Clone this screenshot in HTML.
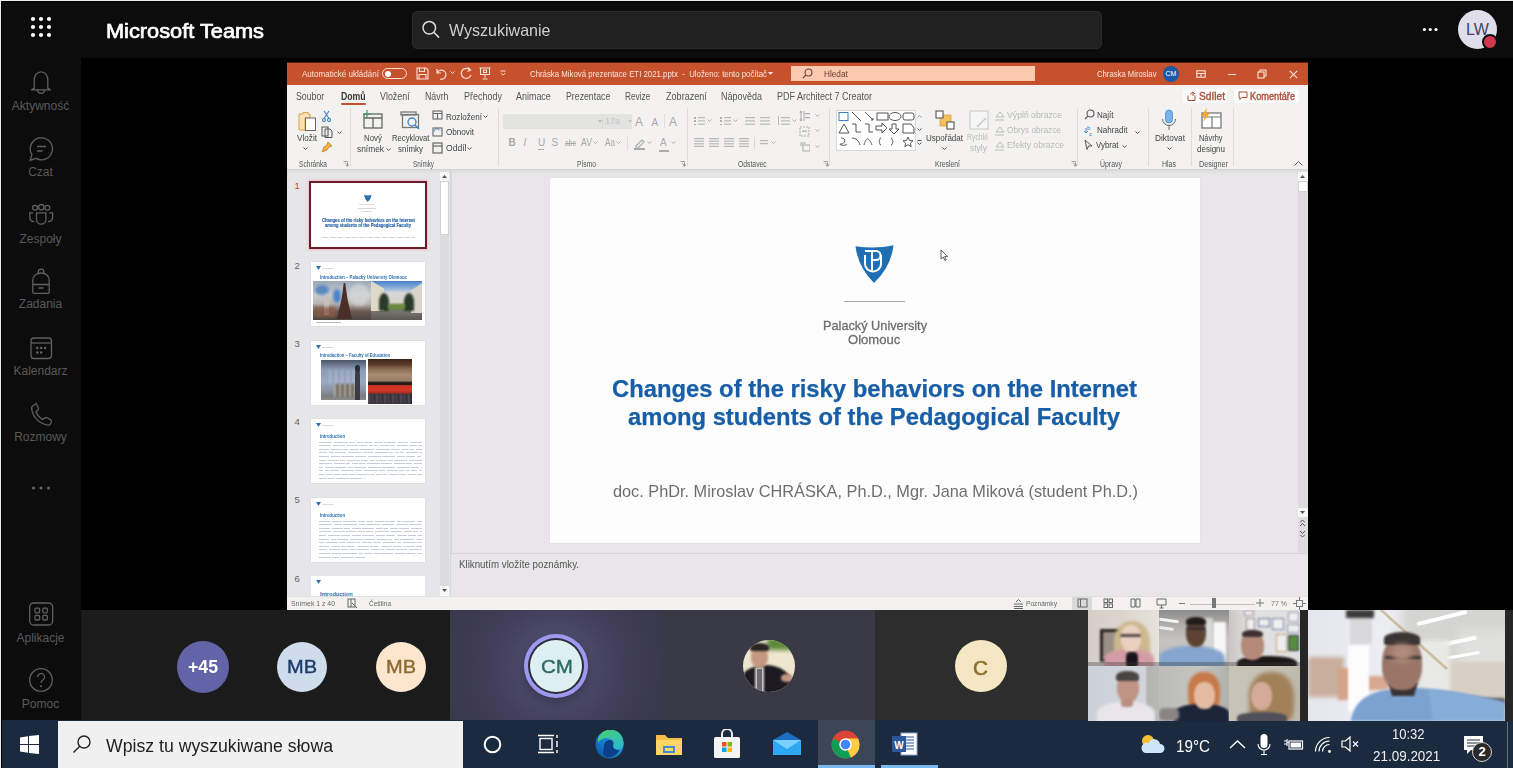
<!DOCTYPE html>
<html><head><meta charset="utf-8"><style>
*{margin:0;padding:0;box-sizing:border-box}
html,body{width:1513px;height:768px;overflow:hidden;background:#000;font-family:"Liberation Sans",sans-serif}
.a{position:absolute}
.t{line-height:1;white-space:nowrap;transform-origin:0 0}
.lbl{left:0;width:81px;text-align:center;font-size:12px;color:#595959;white-space:nowrap;line-height:1}
.ic{fill:none;stroke:#606060;stroke-width:1.3}
.bl{filter:blur(1.5px)}
#t1{transform:scaleX(1.0879)}
#t2{transform:scaleX(0.9723)}
#t3{transform:scaleX(0.8947)}
#t4{transform:scaleX(0.8692)}
#t5{transform:scaleX(0.9148)}
#t6{transform:scaleX(0.8557)}
#t7{transform:scaleX(0.8775)}
#t8{transform:scaleX(0.8714)}
#t9{transform:scaleX(0.8903)}
#t10{transform:scaleX(0.8806)}
#t11{transform:scaleX(0.8970)}
#t12{transform:scaleX(0.8945)}
#t13{transform:scaleX(0.8756)}
#t14{transform:scaleX(0.8307)}
#t15{transform:scaleX(0.9083)}
#t16{transform:scaleX(0.8971)}
#t17{transform:scaleX(0.8997)}
#t18{transform:scaleX(1.0165)}
#t19{transform:scaleX(0.9198)}
#t20{transform:scaleX(0.7795)}
#t21{transform:scaleX(0.7409)}
#t22{transform:scaleX(0.7886)}
#t23{transform:scaleX(0.7993)}
#t24{transform:scaleX(0.8016)}
#t25{transform:scaleX(0.8167)}
#t26{transform:scaleX(0.8228)}
#t27{transform:scaleX(0.8522)}
#t28{transform:scaleX(0.8608)}
#t29{transform:scaleX(0.8312)}
#t30{transform:scaleX(0.8816)}
#t31{transform:scaleX(0.8070)}
#t32{transform:scaleX(0.8307)}
#t33{transform:scaleX(0.8521)}
#t34{transform:scaleX(0.8550)}
#t35{transform:scaleX(0.9023)}
#t44{transform:scaleX(0.7578)}
#t45{transform:scaleX(0.8724)}
#t46{transform:scaleX(0.8174)}
#t48{transform:scaleX(0.8439)}
#t49{transform:scaleX(0.7632)}
#t50{transform:scaleX(0.9444)}
#t51{transform:scaleX(0.9641)}
#t52{transform:scaleX(0.9226)}
#t53{transform:scaleX(0.9575)}
#t54{transform:scaleX(0.8911)}
#t55{transform:scaleX(0.8962)}
#t56{transform:scaleX(0.8759)}
#t57{transform:scaleX(0.8739)}
#t58{transform:scaleX(0.7809)}
#t59{transform:scaleX(0.8413)}
#t66{transform:scaleX(0.7820)}
#t67{transform:scaleX(0.7718)}
#t68{transform:scaleX(0.7625)}
#t69{transform:scaleX(0.7458)}
#t70{transform:scaleX(0.7663)}
#t71{transform:scaleX(0.7663)}
#t72{transform:scaleX(0.9793)}
#t73{transform:scaleX(1.0052)}
#t74{transform:scaleX(1.0263)}
#t75{transform:scaleX(1.0265)}
#t76{transform:scaleX(1.0250)}
#t77{transform:scaleX(0.9740)}
#t78{transform:scaleX(0.8604)}
#t79{transform:scaleX(0.8111)}
#t80{transform:scaleX(0.8298)}
#t81{transform:scaleX(0.8775)}
#t82{transform:scaleX(0.9821)}
#t83{transform:scaleX(1.1111)}
#t84{transform:scaleX(1.1111)}
#t85{transform:scaleX(1.0825)}
#t86{transform:scaleX(1.0378)}
#t87{transform:scaleX(0.9824)}
#t88{transform:scaleX(0.8951)}
#t89{transform:scaleX(0.8403)}
#t90{transform:scaleX(0.8675)}
</style></head><body>
<div class="a" style="left:0px;top:0px;width:1513px;height:58px;background:#0c0c0c;"></div>
<div class="a" style="left:0px;top:58px;width:81px;height:662px;background:#0c0c0c;"></div>
<div class="a" style="left:81px;top:58px;width:1432px;height:552px;background:#000;"></div>
<div class="a" style="left:81px;top:610px;width:1432px;height:110px;background:#1b1b1b;"></div>
<div class="a" style="left:0px;top:720px;width:1513px;height:48px;background:#1c2a40;"></div>
<svg class="a" style="left:28px;top:14px;" width="26" height="26" viewBox="0 0 26 26"><g fill="#fff"><circle cx="5" cy="5" r="2.1"/><circle cx="13" cy="5" r="2.1"/><circle cx="21" cy="5" r="2.1"/><circle cx="5" cy="13" r="2.1"/><circle cx="13" cy="13" r="2.1"/><circle cx="21" cy="13" r="2.1"/><circle cx="5" cy="21" r="2.1"/><circle cx="13" cy="21" r="2.1"/><circle cx="21" cy="21" r="2.1"/></g></svg>
<div id="t1" class="a t " style="left:105.5px;top:21.4px;font-size:20px;color:#fff;font-weight:normal;-webkit-text-stroke:.7px #fff">Microsoft Teams</div>
<div class="a" style="left:412px;top:10.5px;width:690px;height:38.7px;background:#212121;border-radius:5px;border:1px solid #2a2a2a"></div>
<svg class="a" style="left:420px;top:18px;" width="22" height="22" viewBox="0 0 22 22"><g fill="none" stroke="#dedede" stroke-width="1.5"><circle cx="9.3" cy="9.8" r="6.3"/><path d="M13.8 14.3l5.3 5.3"/></g></svg>
<div id="t2" class="a t " style="left:449.0px;top:22.3px;font-size:16.5px;color:#cfcfcf;font-weight:normal;">Wyszukiwanie</div>
<svg class="a" style="left:1420px;top:26px;" width="20" height="6" viewBox="0 0 20 6"><g fill="#fff"><circle cx="4.4" cy="3.5" r="1.6"/><circle cx="10.2" cy="3.5" r="1.6"/><circle cx="16" cy="3.5" r="1.6"/></g></svg>
<div class="a" style="left:1458px;top:10px;width:39px;height:39px;border-radius:50%;background:#e1deec;color:#454262;font-size:16px;font-weight:normal;text-align:center;line-height:39px">LW</div>
<div class="a" style="left:1482px;top:34px;width:16px;height:16px;border-radius:50%;background:#d13a4e;border:2.5px solid #0c0c0c"></div>
<svg class="a ic" style="left:26.2px;top:67.6px" width="30" height="30" viewBox="0 0 30 30"><path d="M8.2 20.3V12a6.8 8.2 0 0 1 13.6 0v8.3l2.9 1.6H5.3z M11.6 22a3.4 3.4 0 0 0 6.8 0"/></svg>
<div class="lbl a" style="top:99.8px">Aktywność</div>
<svg class="a ic" style="left:26.2px;top:134.2px" width="30" height="30" viewBox="0 0 30 30"><path d="M15.5 3.8a11 11 0 1 1-5.4 20.6L4.2 26.2l1.7-5.6A11 11 0 0 1 15.5 3.8z M11 12.5h9 M11 17h5.5"/></svg>
<div class="lbl a" style="top:166.4px">Czat</div>
<svg class="a ic" style="left:26.2px;top:200.4px" width="30" height="30" viewBox="0 0 30 30"><circle cx="9" cy="7.8" r="2.4"/><circle cx="15.2" cy="7.2" r="2.7"/><circle cx="21.4" cy="7.8" r="2.4"/><path d="M10.5 12.8h9.4v6.6a4.7 4.7 0 0 1-9.4 0z M7.3 12.8H3.8v5a4 4 0 0 0 4.6 3.8 M23.1 12.8h3.5v5a4 4 0 0 1-4.6 3.8"/></svg>
<div class="lbl a" style="top:233.1px">Zespoły</div>
<svg class="a ic" style="left:26.2px;top:266.9px" width="30" height="30" viewBox="0 0 30 30"><path d="M12.3 6.3V5a2.8 2.8 0 0 1 5.6 0v1.3 M6.8 25V13a8.2 7 0 0 1 16.4 0v12a1.4 1.4 0 0 1-1.4 1.4H8.2A1.4 1.4 0 0 1 6.8 25z M6.8 17.5h16.4 M12.5 21h5"/></svg>
<div class="lbl a" style="top:298.4px">Zadania</div>
<svg class="a ic" style="left:26.2px;top:332.9px" width="30" height="30" viewBox="0 0 30 30"><rect x="5" y="5" width="20.5" height="20.5" rx="3"/><path d="M5 10h20.5"/><g fill="#666" stroke="none"><circle cx="11.3" cy="15" r="1.2"/><circle cx="15.2" cy="15" r="1.2"/><circle cx="19.1" cy="15" r="1.2"/><circle cx="11.3" cy="19.5" r="1.2"/><circle cx="15.2" cy="19.5" r="1.2"/></g></svg>
<div class="lbl a" style="top:364.9px">Kalendarz</div>
<svg class="a ic" style="left:26.2px;top:399.0px" width="30" height="30" viewBox="0 0 30 30"><path d="M10.3 4.6l2 4.3c.4.9.1 1.8-.5 2.4L10 12.8c1.1 3 3.6 6.1 6.8 7.8l2-1.6c.7-.5 1.6-.6 2.3-.2l3.5 2c.8.4 1.1 1.3.8 2.1l-.8 1.8c-.5 1.1-1.7 1.7-2.9 1.4C12.6 24.6 6.3 17.4 5.6 9.3c-.1-1.2.6-2.3 1.6-2.8l1.6-.8c.5-.3 1.2-.2 1.500-1.100z"/></svg>
<div class="lbl a" style="top:431.4px">Rozmowy</div>
<svg class="a" style="left:29px;top:484px" width="24" height="8" viewBox="0 0 24 8" fill="#666"><circle cx="4.5" cy="4" r="1.5"/><circle cx="12" cy="4" r="1.5"/><circle cx="19.5" cy="4" r="1.5"/></svg>
<svg class="a ic" style="left:26.2px;top:599.2px" width="30" height="30" viewBox="0 0 30 30"><rect x="3.7" y="4" width="23" height="22" rx="4"/><rect x="9" y="9.2" width="4.6" height="4.6" rx="1"/><rect x="16.8" y="9.2" width="4.6" height="4.6" rx="1"/><rect x="9" y="16.4" width="4.6" height="4.6" rx="1"/><rect x="16.8" y="16.4" width="4.6" height="4.6" rx="1"/></svg>
<div class="lbl a" style="top:632.0px">Aplikacje</div>
<svg class="a ic" style="left:26.2px;top:665.3px" width="30" height="30" viewBox="0 0 30 30"><circle cx="15" cy="15" r="11.3"/><path d="M11.6 12a3.5 3.5 0 1 1 5.3 3c-1.1.7-1.9 1.4-1.9 3"/><circle cx="15" cy="21.3" r="1" fill="#666" stroke="none"/></svg>
<div class="lbl a" style="top:698.4px">Pomoc</div>
<div class="a" style="left:287px;top:62px;width:1021px;height:548px;background:#f3f2f1;"></div>
<div class="a" style="left:287px;top:62px;width:1021px;height:23px;background:#c6512d;"></div>
<div class="a" style="left:287px;top:62px;width:1021px;height:1px;background:#5a2414;"></div>
<div id="t3" class="a t " style="left:301.5px;top:70.2px;font-size:9px;color:#fbe3d8;font-weight:normal;">Automatické ukládání</div>
<div class="a" style="left:382px;top:68px;width:25px;height:11px;background:transparent;border:1.2px solid #fbe3d8;border-radius:6px"></div>
<div class="a" style="left:384.5px;top:70.5px;width:6px;height:6px;border-radius:50%;background:#fff"></div>
<svg class="a" style="left:416px;top:67px;" width="13" height="13" viewBox="0 0 13 13"><g fill="none" stroke="#fbe3d8" stroke-width="1.1"><path d="M1 1h9l2 2v9H1z M3.5 1v3.5h5V1 M3 12V7.5h7V12"/></g></svg>
<svg class="a" style="left:435px;top:67px;" width="12" height="13" viewBox="0 0 12 13"><g fill="none" stroke="#fbe3d8" stroke-width="1.2"><path d="M2 2v4h4 M2.3 5.8A4.5 4.5 0 1 1 5 12"/></g></svg>
<svg class="a" style="left:450px;top:71px;" width="5" height="4" viewBox="0 0 5 4"><path d="M.5 .5l2 2 2-2" fill="none" stroke="#fbe3d8" stroke-width="1"/></svg>
<svg class="a" style="left:460px;top:66px;" width="13" height="14" viewBox="0 0 13 14"><g fill="none" stroke="#fbe3d8" stroke-width="1.2"><path d="M8 1.5l2.5 2.5-3 1.5 M10 4A5 5 0 1 0 11 9"/></g></svg>
<svg class="a" style="left:479px;top:67px;" width="12" height="13" viewBox="0 0 12 13"><g fill="none" stroke="#fbe3d8" stroke-width="1.1"><path d="M.5 1h11 M1.5 1v6.5h9V1 M6 7.5v3 M3.5 12h5 M4.5 3h3v2.5h-3z"/></g></svg>
<svg class="a" style="left:500px;top:70px;" width="6" height="6" viewBox="0 0 6 6"><path d="M.5 1h5 M.8 3l2.2 2.2L5.2 3" fill="none" stroke="#fbe3d8" stroke-width="1"/></svg>
<div id="t4" class="a t " style="left:529.5px;top:70.2px;font-size:9px;color:#fbe3d8;font-weight:normal;">Chráska Miková prezentace ETI 2021.pptx&nbsp; - &nbsp;Uloženo: tento počítač</div>
<svg class="a" style="left:768px;top:72px;" width="5" height="3" viewBox="0 0 5 3"><path d="M0 0h5L2.5 3z" fill="#fbe3d8"/></svg>
<div class="a" style="left:791px;top:66px;width:244px;height:15px;background:#fbc8b0;"></div>
<svg class="a" style="left:802px;top:68px;" width="11" height="11" viewBox="0 0 11 11"><g fill="none" stroke="#6a4030" stroke-width="1.1"><circle cx="6.5" cy="4.5" r="3.5"/><path d="M4 7L1 10"/></g></svg>
<div id="t5" class="a t " style="left:823.8px;top:70.2px;font-size:9px;color:#6a3a2a;font-weight:normal;">Hledat</div>
<div id="t6" class="a t " style="left:1096.5px;top:70.2px;font-size:9px;color:#fbe3d8;font-weight:normal;">Chraska Miroslav</div>
<div class="a" style="left:1163px;top:66px;width:16px;height:16px;border-radius:50%;background:#1d5aa5;color:#fff;font-size:7px;line-height:16px;text-align:center">CM</div>
<svg class="a" style="left:1196px;top:70px;" width="10" height="8" viewBox="0 0 10 8"><g fill="none" stroke="#fbe3d8" stroke-width="1.1"><rect x=".8" y=".8" width="8.4" height="6.4"/><path d="M.8 3.5h8.4 M5 3.5v3.7"/></g></svg>
<div class="a" style="left:1228px;top:74px;width:8px;height:1.1px;background:#fbe3d8;"></div>
<svg class="a" style="left:1257px;top:69px;" width="10" height="10" viewBox="0 0 10 10"><g fill="none" stroke="#fbe3d8" stroke-width="1.1"><rect x="1" y="3" width="6" height="6"/><path d="M3 3V1h6v6H7"/></g></svg>
<svg class="a" style="left:1289px;top:69.5px;" width="9" height="9" viewBox="0 0 9 9"><path d="M.8 .8l7.4 7.4M8.2 .8L.8 8.2" fill="none" stroke="#fbe3d8" stroke-width="1.1"/></svg>
<div id="t7" class="a t " style="left:295.7px;top:92.3px;font-size:10px;color:#555;font-weight:normal;">Soubor</div>
<div id="t8" class="a t " style="left:340.8px;top:92.3px;font-size:10px;color:#3a3a3a;font-weight:bold;">Domů</div>
<div id="t9" class="a t " style="left:380.0px;top:92.3px;font-size:10px;color:#555;font-weight:normal;">Vložení</div>
<div id="t10" class="a t " style="left:424.5px;top:92.3px;font-size:10px;color:#555;font-weight:normal;">Návrh</div>
<div id="t11" class="a t " style="left:463.5px;top:92.3px;font-size:10px;color:#555;font-weight:normal;">Přechody</div>
<div id="t12" class="a t " style="left:516.0px;top:92.3px;font-size:10px;color:#555;font-weight:normal;">Animace</div>
<div id="t13" class="a t " style="left:565.6px;top:92.3px;font-size:10px;color:#555;font-weight:normal;">Prezentace</div>
<div id="t14" class="a t " style="left:625.2px;top:92.3px;font-size:10px;color:#555;font-weight:normal;">Revize</div>
<div id="t15" class="a t " style="left:665.6px;top:92.3px;font-size:10px;color:#555;font-weight:normal;">Zobrazení</div>
<div id="t16" class="a t " style="left:720.7px;top:92.3px;font-size:10px;color:#555;font-weight:normal;">Nápověda</div>
<div id="t17" class="a t " style="left:776.9px;top:92.3px;font-size:10px;color:#555;font-weight:normal;">PDF Architect 7 Creator</div>
<div class="a" style="left:341px;top:102.5px;width:25px;height:2.5px;background:#c4502c;border-radius:1px"></div>
<div class="a" style="left:1183px;top:89px;width:44px;height:14px;background:#fdfdfd;border-radius:2px"></div>
<svg class="a" style="left:1187px;top:91px;" width="9" height="10" viewBox="0 0 9 10"><g fill="none" stroke="#b04a2e" stroke-width="1"><path d="M1 4.5v5h7v-5 M3 3.5l3-2.5 2 2M6 1v4"/></g></svg>
<div id="t18" class="a t " style="left:1199.0px;top:91.8px;font-size:10px;color:#b0503a;font-weight:normal;-webkit-text-stroke:.4px #b0503a">Sdílet</div>
<div class="a" style="left:1234px;top:89px;width:65px;height:14px;background:#fdfdfd;border-radius:2px"></div>
<svg class="a" style="left:1238px;top:91px;" width="10" height="9" viewBox="0 0 10 9"><g fill="none" stroke="#b04a2e" stroke-width="1"><path d="M1 1h8v5.5H4L2 8.5V6.5H1z"/></g></svg>
<div id="t19" class="a t " style="left:1250.0px;top:91.8px;font-size:10px;color:#b0503a;font-weight:normal;-webkit-text-stroke:.4px #b0503a">Komentáře</div>
<div class="a" style="left:350px;top:108px;width:1px;height:58px;background:#dcdcdc;"></div>
<div class="a" style="left:497.5px;top:108px;width:1px;height:58px;background:#dcdcdc;"></div>
<div class="a" style="left:686.5px;top:108px;width:1px;height:58px;background:#dcdcdc;"></div>
<div class="a" style="left:829px;top:108px;width:1px;height:58px;background:#dcdcdc;"></div>
<div class="a" style="left:1077px;top:108px;width:1px;height:58px;background:#dcdcdc;"></div>
<div class="a" style="left:1148px;top:108px;width:1px;height:58px;background:#dcdcdc;"></div>
<div class="a" style="left:1191px;top:108px;width:1px;height:58px;background:#dcdcdc;"></div>
<div class="a" style="left:1233px;top:108px;width:1px;height:58px;background:#dcdcdc;"></div>
<div id="t20" class="a t " style="left:299.0px;top:160.3px;font-size:8.5px;color:#555;font-weight:normal;">Schránka</div>
<div id="t21" class="a t " style="left:413.0px;top:160.3px;font-size:8.5px;color:#555;font-weight:normal;">Snímky</div>
<div id="t22" class="a t " style="left:577.0px;top:160.3px;font-size:8.5px;color:#555;font-weight:normal;">Písmo</div>
<div id="t23" class="a t " style="left:738.3px;top:160.3px;font-size:8.5px;color:#555;font-weight:normal;">Odstavec</div>
<div id="t24" class="a t " style="left:935.0px;top:160.3px;font-size:8.5px;color:#555;font-weight:normal;">Kreslení</div>
<div id="t25" class="a t " style="left:1100.0px;top:160.3px;font-size:8.5px;color:#555;font-weight:normal;">Úpravy</div>
<div id="t26" class="a t " style="left:1162.0px;top:160.3px;font-size:8.5px;color:#555;font-weight:normal;">Hlas</div>
<div id="t27" class="a t " style="left:1199.0px;top:160.3px;font-size:8.5px;color:#555;font-weight:normal;">Designer</div>
<svg class="a" style="left:343px;top:161px;" width="6" height="6" viewBox="0 0 6 6"><path d="M.5 .5h4v4M2 2l3 3M3 5h2V3" fill="none" stroke="#888" stroke-width=".8"/></svg>
<svg class="a" style="left:680px;top:161px;" width="6" height="6" viewBox="0 0 6 6"><path d="M.5 .5h4v4M2 2l3 3M3 5h2V3" fill="none" stroke="#888" stroke-width=".8"/></svg>
<svg class="a" style="left:823px;top:161px;" width="6" height="6" viewBox="0 0 6 6"><path d="M.5 .5h4v4M2 2l3 3M3 5h2V3" fill="none" stroke="#888" stroke-width=".8"/></svg>
<svg class="a" style="left:1071px;top:161px;" width="6" height="6" viewBox="0 0 6 6"><path d="M.5 .5h4v4M2 2l3 3M3 5h2V3" fill="none" stroke="#888" stroke-width=".8"/></svg>
<svg class="a" style="left:297px;top:110px;" width="21" height="21" viewBox="0 0 21 21"><path d="M2 4h4V2.5h5V4h2v4H8v12H2z" fill="#fbe1b8" stroke="#e0a040" stroke-width="1"/><rect x="8.5" y="8" width="10" height="12.5" fill="#fff" stroke="#666" stroke-width="1"/></svg>
<div id="t28" class="a t " style="left:296.5px;top:133.0px;font-size:9.5px;color:#444;font-weight:normal;">Vložit</div>
<svg class="a" style="left:303px;top:147px;" width="5" height="4" viewBox="0 0 5 4"><path d="M.5 .5l2 2 2-2" fill="none" stroke="#555" stroke-width="1"/></svg>
<svg class="a" style="left:322px;top:110px;" width="9" height="12" viewBox="0 0 9 12"><g fill="none" stroke="#3a80c0" stroke-width="1.1"><path d="M2 1l5 7.5M7 1L2 8.5"/><circle cx="2" cy="10" r="1.5"/><circle cx="7" cy="10" r="1.5"/></g></svg>
<svg class="a" style="left:321px;top:126px;" width="13" height="12" viewBox="0 0 13 12"><g fill="none" stroke="#555" stroke-width="1"><rect x="1" y="1" width="6" height="9"/><path d="M4 3h5l2 2v6.5H4z"/></g></svg>
<svg class="a" style="left:337px;top:131px;" width="5" height="4" viewBox="0 0 5 4"><path d="M.5 .5l2 2 2-2" fill="none" stroke="#555" stroke-width="1"/></svg>
<svg class="a" style="left:321px;top:141px;" width="12" height="12" viewBox="0 0 12 12"><path d="M7 1l4 4-3 1-2 3-5 2 2-5 3-2z" fill="#f5b040" stroke="#c08020" stroke-width=".8"/></svg>
<svg class="a" style="left:362px;top:109px;" width="22" height="20" viewBox="0 0 22 20"><g fill="none" stroke="#666" stroke-width="1.3"><rect x="2" y="5" width="18" height="14"/><path d="M2 9h18 M11 9v10"/></g><path d="M5 1v8 M1 5h8" stroke="#3a9a60" stroke-width="1.2"/></svg>
<div id="t29" class="a t " style="left:364.0px;top:133.0px;font-size:9.5px;color:#444;font-weight:normal;">Nový</div>
<div id="t30" class="a t " style="left:357.0px;top:143.5px;font-size:9.5px;color:#444;font-weight:normal;">snímek</div>
<svg class="a" style="left:386px;top:148px;" width="5" height="4" viewBox="0 0 5 4"><path d="M.5 .5l2 2 2-2" fill="none" stroke="#555" stroke-width="1"/></svg>
<svg class="a" style="left:400px;top:111px;" width="21" height="20" viewBox="0 0 21 20"><g fill="none" stroke="#777" stroke-width="1.3"><rect x="1" y="1" width="15" height="3"/><rect x="2.5" y="3.5" width="16" height="13"/></g><g fill="none" stroke="#3a80c0" stroke-width="1.3"><circle cx="12" cy="11" r="4"/><path d="M15 14l4 4"/></g></svg>
<div id="t31" class="a t " style="left:391.5px;top:133.0px;font-size:9.5px;color:#444;font-weight:normal;">Recyklovat</div>
<div id="t32" class="a t " style="left:397.5px;top:143.5px;font-size:9.5px;color:#444;font-weight:normal;">snímky</div>
<svg class="a" style="left:432px;top:110px;" width="11" height="10" viewBox="0 0 11 10"><g fill="none" stroke="#666" stroke-width="1.1"><rect x="1" y="1" width="9" height="8"/><path d="M1 3.5h9 M5.5 3.5v5.5"/></g></svg>
<div id="t33" class="a t " style="left:446.0px;top:111.5px;font-size:9.5px;color:#444;font-weight:normal;">Rozložení</div>
<svg class="a" style="left:483px;top:115px;" width="5" height="4" viewBox="0 0 5 4"><path d="M.5 .5l2 2 2-2" fill="none" stroke="#555" stroke-width="1"/></svg>
<svg class="a" style="left:432px;top:126px;" width="11" height="11" viewBox="0 0 11 11"><g fill="none" stroke="#666" stroke-width="1.1"><rect x="1" y="2" width="9" height="8"/></g><path d="M2 5.5a3 3 0 0 1 5-2l1 1" fill="none" stroke="#3a80c0" stroke-width="1"/></svg>
<div id="t34" class="a t " style="left:446.0px;top:127.0px;font-size:9.5px;color:#444;font-weight:normal;">Obnovit</div>
<svg class="a" style="left:432px;top:142px;" width="11" height="12" viewBox="0 0 11 12"><g fill="none" stroke="#666" stroke-width="1.2"><rect x="1" y="1" width="9" height="10"/><path d="M1 4h9"/></g></svg>
<div id="t35" class="a t " style="left:446.0px;top:143.0px;font-size:9.5px;color:#444;font-weight:normal;">Oddíl</div>
<svg class="a" style="left:467px;top:147px;" width="5" height="4" viewBox="0 0 5 4"><path d="M.5 .5l2 2 2-2" fill="none" stroke="#555" stroke-width="1"/></svg>
<div class="a" style="left:503px;top:114px;width:98.5px;height:14.5px;background:#e3e3e2;"></div>
<div class="a" style="left:602px;top:114px;width:30px;height:14.5px;background:#e3e3e2;"></div>
<svg class="a" style="left:598px;top:120px;" width="4" height="3" viewBox="0 0 4 3"><path d="M0 0h4L2 3z" fill="#bbb"/></svg>
<div id="t36" class="a t " style="left:605.0px;top:117.4px;font-size:9px;color:#c6c6c6;font-weight:normal;">17a</div>
<div id="t37" class="a t " style="left:635.0px;top:115.8px;font-size:12px;color:#a8a8a8;font-weight:normal;">A</div>
<div id="t38" class="a t " style="left:651.5px;top:117.5px;font-size:10px;color:#a8a8a8;font-weight:normal;">A</div>
<div id="t39" class="a t " style="left:669.0px;top:115.8px;font-size:12px;color:#a8a8a8;font-weight:normal;">A</div>
<div id="t40" class="a t " style="left:508.5px;top:138.0px;font-size:10px;color:#a8a8a8;font-weight:bold;">B</div>
<div id="t41" class="a t " style="left:523.5px;top:138.0px;font-size:10px;color:#a8a8a8;font-weight:normal;font-style:italic">I</div>
<div id="t42" class="a t " style="left:538.0px;top:138.0px;font-size:10px;color:#a8a8a8;font-weight:normal;">U</div>
<div id="t43" class="a t " style="left:551.5px;top:138.0px;font-size:10px;color:#a8a8a8;font-weight:normal;">S</div>
<div class="a" style="left:537.5px;top:149px;width:6px;height:1px;background:#a8a8a8;"></div>
<div id="t44" class="a t " style="left:565.0px;top:138.9px;font-size:9px;color:#a8a8a8;font-weight:normal;">abc</div>
<div class="a" style="left:565px;top:143.3px;width:11px;height:1px;background:#a8a8a8;"></div>
<div id="t45" class="a t " style="left:580.5px;top:137.5px;font-size:10px;color:#a8a8a8;font-weight:normal;">AV</div>
<div id="t46" class="a t " style="left:605.0px;top:138.0px;font-size:10px;color:#a8a8a8;font-weight:normal;">Aa</div>
<svg class="a" style="left:633px;top:137px;" width="13" height="13" viewBox="0 0 13 13"><g fill="none" stroke="#aaa" stroke-width="1.1"><path d="M3 9l6-6 2 2-6 6H3z"/></g><rect x="1" y="11" width="11" height="2" fill="#aaa"/></svg>
<div id="t47" class="a t " style="left:660.0px;top:137.5px;font-size:10px;color:#a8a8a8;font-weight:normal;">A</div>
<div class="a" style="left:659px;top:149.5px;width:10px;height:2px;background:#aaa;"></div>
<div class="a" style="left:694px;top:117px;width:2px;height:1.6px;background:#b0b0b0;"></div>
<div class="a" style="left:720px;top:117px;width:2px;height:1.6px;background:#b0b0b0;"></div>
<div class="a" style="left:694px;top:120.3px;width:2px;height:1.6px;background:#b0b0b0;"></div>
<div class="a" style="left:720px;top:120.3px;width:2px;height:1.6px;background:#b0b0b0;"></div>
<div class="a" style="left:694px;top:123.6px;width:2px;height:1.6px;background:#b0b0b0;"></div>
<div class="a" style="left:720px;top:123.6px;width:2px;height:1.6px;background:#b0b0b0;"></div>
<svg class="a" style="left:697.5px;top:117px;" width="7" height="11" viewBox="0 0 7 11"><rect x="0" y="0.0" width="7" height="1.2" fill="#b9b9b9"/><rect x="0" y="3.3" width="7" height="1.2" fill="#b9b9b9"/><rect x="0" y="6.6" width="7" height="1.2" fill="#b9b9b9"/></svg>
<svg class="a" style="left:707px;top:119px;" width="5" height="4" viewBox="0 0 5 4"><path d="M.5 .5l2 2 2-2" fill="none" stroke="#b0b0b0" stroke-width="1"/></svg>
<svg class="a" style="left:723.5px;top:117px;" width="7" height="11" viewBox="0 0 7 11"><rect x="0" y="0.0" width="7" height="1.2" fill="#b9b9b9"/><rect x="0" y="3.3" width="7" height="1.2" fill="#b9b9b9"/><rect x="0" y="6.6" width="7" height="1.2" fill="#b9b9b9"/></svg>
<svg class="a" style="left:733px;top:119px;" width="5" height="4" viewBox="0 0 5 4"><path d="M.5 .5l2 2 2-2" fill="none" stroke="#b0b0b0" stroke-width="1"/></svg>
<svg class="a" style="left:745px;top:117px;" width="10" height="11" viewBox="0 0 10 11"><rect x="0" y="0.0" width="10" height="1.2" fill="#b9b9b9"/><rect x="0" y="3.3" width="10" height="1.2" fill="#b9b9b9"/><rect x="0" y="6.6" width="10" height="1.2" fill="#b9b9b9"/></svg>
<svg class="a" style="left:760px;top:117px;" width="10" height="11" viewBox="0 0 10 11"><rect x="0" y="0.0" width="10" height="1.2" fill="#b9b9b9"/><rect x="0" y="3.3" width="10" height="1.2" fill="#b9b9b9"/><rect x="0" y="6.6" width="10" height="1.2" fill="#b9b9b9"/></svg>
<svg class="a" style="left:781px;top:117px;" width="9" height="11" viewBox="0 0 9 11"><rect x="0" y="0.0" width="9" height="1.2" fill="#b9b9b9"/><rect x="0" y="3.3" width="9" height="1.2" fill="#b9b9b9"/><rect x="0" y="6.6" width="9" height="1.2" fill="#b9b9b9"/></svg>
<div class="a" style="left:778px;top:116px;width:1px;height:9px;background:#b8b8b8;"></div>
<svg class="a" style="left:792px;top:119px;" width="5" height="4" viewBox="0 0 5 4"><path d="M.5 .5l2 2 2-2" fill="none" stroke="#b0b0b0" stroke-width="1"/></svg>
<svg class="a" style="left:694px;top:138px;" width="10" height="12" viewBox="0 0 10 12"><rect x="0" y="0.0" width="10" height="1.2" fill="#b9b9b9"/><rect x="0" y="2.6" width="10" height="1.2" fill="#b9b9b9"/><rect x="0" y="5.2" width="10" height="1.2" fill="#b9b9b9"/><rect x="0" y="7.8" width="10" height="1.2" fill="#b9b9b9"/></svg>
<svg class="a" style="left:709px;top:138px;" width="10" height="12" viewBox="0 0 10 12"><rect x="0" y="0.0" width="10" height="1.2" fill="#b9b9b9"/><rect x="0" y="2.6" width="10" height="1.2" fill="#b9b9b9"/><rect x="0" y="5.2" width="10" height="1.2" fill="#b9b9b9"/><rect x="0" y="7.8" width="10" height="1.2" fill="#b9b9b9"/></svg>
<svg class="a" style="left:724px;top:138px;" width="10" height="12" viewBox="0 0 10 12"><rect x="0" y="0.0" width="10" height="1.2" fill="#b9b9b9"/><rect x="0" y="2.6" width="10" height="1.2" fill="#b9b9b9"/><rect x="0" y="5.2" width="10" height="1.2" fill="#b9b9b9"/><rect x="0" y="7.8" width="10" height="1.2" fill="#b9b9b9"/></svg>
<svg class="a" style="left:739px;top:138px;" width="10" height="12" viewBox="0 0 10 12"><rect x="0" y="0.0" width="10" height="1.2" fill="#b9b9b9"/><rect x="0" y="2.6" width="10" height="1.2" fill="#b9b9b9"/><rect x="0" y="5.2" width="10" height="1.2" fill="#b9b9b9"/><rect x="0" y="7.8" width="10" height="1.2" fill="#b9b9b9"/></svg>
<div class="a" style="left:754px;top:137px;width:1px;height:12px;background:#d6d6d6;"></div>
<svg class="a" style="left:760px;top:140px;" width="8" height="8" viewBox="0 0 8 8"><rect x="0" y="0.0" width="8" height="1.2" fill="#b9b9b9"/><rect x="0" y="3.0" width="8" height="1.2" fill="#b9b9b9"/></svg>
<svg class="a" style="left:771px;top:141px;" width="5" height="4" viewBox="0 0 5 4"><path d="M.5 .5l2 2 2-2" fill="none" stroke="#b0b0b0" stroke-width="1"/></svg>
<svg class="a" style="left:799px;top:110px;" width="11" height="12" viewBox="0 0 11 12"><path d="M2 1v10M5 1v10M1 3l1-2 1 2M1 9l1 2 1-2" fill="none" stroke="#aaa" stroke-width="1"/><rect x="6" y="3" width="5" height="1.2" fill="#aaa"/><rect x="6" y="7" width="5" height="1.2" fill="#aaa"/></svg>
<svg class="a" style="left:815px;top:114px;" width="5" height="4" viewBox="0 0 5 4"><path d="M.5 .5l2 2 2-2" fill="none" stroke="#b0b0b0" stroke-width="1"/></svg>
<svg class="a" style="left:799px;top:126px;" width="11" height="11" viewBox="0 0 11 11"><rect x="1" y="1" width="9" height="9" fill="none" stroke="#aaa" stroke-width="1" stroke-dasharray="2 1"/><rect x="3" y="4.5" width="5" height="1.2" fill="#aaa"/></svg>
<svg class="a" style="left:815px;top:129px;" width="5" height="4" viewBox="0 0 5 4"><path d="M.5 .5l2 2 2-2" fill="none" stroke="#b0b0b0" stroke-width="1"/></svg>
<svg class="a" style="left:799px;top:141px;" width="11" height="11" viewBox="0 0 11 11"><rect x="4" y="4" width="7" height="6" fill="none" stroke="#aaa" stroke-width="1"/><path d="M1 2h6M1 4h3" stroke="#aaa" stroke-width="1"/></svg>
<svg class="a" style="left:815px;top:145px;" width="5" height="4" viewBox="0 0 5 4"><path d="M.5 .5l2 2 2-2" fill="none" stroke="#b0b0b0" stroke-width="1"/></svg>
<div class="a" style="left:601.5px;top:114px;width:1px;height:14.5px;background:#d8d8d8;"></div>
<svg class="a" style="left:628px;top:120px;" width="4" height="3" viewBox="0 0 4 3"><path d="M0 0h4L2 3z" fill="#c8c8c8"/></svg>
<div class="a" style="left:664px;top:114px;width:1px;height:14px;background:#dedede;"></div>
<div class="a" style="left:627px;top:137px;width:1px;height:13px;background:#dedede;"></div>
<svg class="a" style="left:593px;top:141px;" width="5" height="4" viewBox="0 0 5 4"><path d="M.5 .5l2 2 2-2" fill="none" stroke="#b0b0b0" stroke-width="1"/></svg>
<svg class="a" style="left:616px;top:141px;" width="5" height="4" viewBox="0 0 5 4"><path d="M.5 .5l2 2 2-2" fill="none" stroke="#b0b0b0" stroke-width="1"/></svg>
<svg class="a" style="left:647px;top:141px;" width="5" height="4" viewBox="0 0 5 4"><path d="M.5 .5l2 2 2-2" fill="none" stroke="#b0b0b0" stroke-width="1"/></svg>
<svg class="a" style="left:671px;top:141px;" width="5" height="4" viewBox="0 0 5 4"><path d="M.5 .5l2 2 2-2" fill="none" stroke="#b0b0b0" stroke-width="1"/></svg>
<div class="a" style="left:835.5px;top:109.5px;width:87px;height:41px;background:#ffffff;border:1px solid #d8d8d8"></div>
<div class="a" style="left:915px;top:109.5px;width:8px;height:41px;background:#f3f3f3;border-left:1px solid #d8d8d8"></div>
<svg class="a" style="left:838px;top:111px;" width="80" height="38" viewBox="0 0 80 38"><g fill="none" stroke="#555" stroke-width="1"><rect x="1" y="1.5" width="9" height="8" stroke="#3a80c0"/><path d="M14 1l9 9 M27 1l8 8 M33 9h2v-2"/><rect x="39" y="2" width="11" height="7"/><ellipse cx="57" cy="5.5" rx="6" ry="4"/><rect x="65" y="2" width="11" height="7" rx="2"/><path d="M1 22l5-9 5 9z M14 13h4v8h5 M27 13h4v8h4 M38 15h6v-3l5 5-5 5v-3h-6z M54 13h4v5h3l-5 5-5-5h3z M65 13h8l3 4v5h-11z"/><path d="M3 27c6 0 4 6 0 6s4 3 6 0 M14 27c4 0 7 3 8 7 M26 34c2-8 5-8 8 0 M43 27c-2 0-1 3-2 3.5 1 .5 0 3.5 2 3.5 M53 27c2 0 1 3 2 3.5-1 .5 0 3.5-2 3.5 M70 26l1.5 3.5 3.5.3-2.7 2.4.9 3.5-3.2-2-3.2 2 .9-3.5-2.7-2.4 3.5-.3z"/></g></svg>
<svg class="a" style="left:917px;top:114px;" width="5" height="4" viewBox="0 0 5 4"><path d="M.5 3.5l2-2 2 2" fill="none" stroke="#999" stroke-width="1"/></svg>
<svg class="a" style="left:917px;top:128px;" width="5" height="4" viewBox="0 0 5 4"><path d="M.5 .5l2 2 2-2" fill="none" stroke="#555" stroke-width="1"/></svg>
<svg class="a" style="left:917px;top:140px;" width="5" height="6" viewBox="0 0 5 6"><path d="M.5 .5h4 M.5 2.5l2 2 2-2" fill="none" stroke="#555" stroke-width="1"/></svg>
<svg class="a" style="left:935px;top:110px;" width="20" height="20" viewBox="0 0 20 20"><rect x="5" y="5" width="11" height="11" fill="#f5c060" stroke="#e0a030" stroke-width=".8"/><rect x="1" y="1" width="7" height="7" fill="#fff" stroke="#555" stroke-width="1.1"/><rect x="12" y="12" width="7" height="7" fill="#fff" stroke="#555" stroke-width="1.1"/></svg>
<div id="t48" class="a t " style="left:926.0px;top:133.0px;font-size:9.5px;color:#444;font-weight:normal;">Uspořádat</div>
<svg class="a" style="left:942px;top:147px;" width="5" height="4" viewBox="0 0 5 4"><path d="M.5 .5l2 2 2-2" fill="none" stroke="#555" stroke-width="1"/></svg>
<svg class="a" style="left:969px;top:110px;" width="20" height="20" viewBox="0 0 20 20"><rect x="1" y="1" width="18" height="18" fill="#f6f6f6" stroke="#c8c8c8" stroke-width="1"/><path d="M8 17l9-9" stroke="#c8c8c8" stroke-width="1.5"/></svg>
<div id="t49" class="a t " style="left:967.0px;top:133.4px;font-size:9px;color:#b8b8b8;font-weight:normal;">Rychlé</div>
<div id="t50" class="a t " style="left:970.0px;top:143.9px;font-size:9px;color:#b8b8b8;font-weight:normal;">styly</div>
<svg class="a" style="left:994px;top:110px;" width="11" height="11" viewBox="0 0 11 11"><g fill="none" stroke="#bbb" stroke-width="1"><path d="M2 7l4-5 4 5z M1 10h9"/></g></svg>
<div id="t51" class="a t " style="left:1007.0px;top:111.4px;font-size:9px;color:#b8b8b8;font-weight:normal;">Výplň obrazce</div>
<svg class="a" style="left:994px;top:125px;" width="11" height="11" viewBox="0 0 11 11"><g fill="none" stroke="#bbb" stroke-width="1"><path d="M2 7l4-5 4 5z M1 10h9"/></g></svg>
<div id="t52" class="a t " style="left:1007.0px;top:126.4px;font-size:9px;color:#b8b8b8;font-weight:normal;">Obrys obrazce</div>
<svg class="a" style="left:994px;top:139.5px;" width="11" height="11" viewBox="0 0 11 11"><g fill="none" stroke="#bbb" stroke-width="1"><path d="M2 7l4-5 4 5z M1 10h9"/></g></svg>
<div id="t53" class="a t " style="left:1007.0px;top:140.9px;font-size:9px;color:#b8b8b8;font-weight:normal;">Efekty obrazce</div>
<svg class="a" style="left:1084px;top:109px;" width="11" height="11" viewBox="0 0 11 11"><g fill="none" stroke="#555" stroke-width="1.1"><circle cx="6.5" cy="4.5" r="3.5"/><path d="M4 7L1 10"/></g></svg>
<div id="t54" class="a t " style="left:1096.7px;top:111.4px;font-size:9px;color:#444;font-weight:normal;">Najít</div>
<svg class="a" style="left:1083px;top:124px;" width="11" height="13" viewBox="0 0 11 13"><text x="4" y="6" font-size="6" fill="#3a80c0" font-family="Liberation Sans">b</text><text x="6" y="12" font-size="6" fill="#3a80c0" font-family="Liberation Sans">c</text><path d="M3 4v5l-2-2M3 9l2-2" fill="none" stroke="#3a80c0" stroke-width=".9"/></svg>
<div id="t55" class="a t " style="left:1097.0px;top:126.4px;font-size:9px;color:#444;font-weight:normal;">Nahradit</div>
<svg class="a" style="left:1135px;top:131px;" width="5" height="4" viewBox="0 0 5 4"><path d="M.5 .5l2 2 2-2" fill="none" stroke="#555" stroke-width="1"/></svg>
<svg class="a" style="left:1084px;top:139px;" width="9" height="11" viewBox="0 0 9 11"><path d="M1 1l7 6H4.5l-1.5 3.5z" fill="none" stroke="#555" stroke-width="1"/></svg>
<div id="t56" class="a t " style="left:1096.0px;top:141.4px;font-size:9px;color:#444;font-weight:normal;">Vybrat</div>
<svg class="a" style="left:1122px;top:145px;" width="5" height="4" viewBox="0 0 5 4"><path d="M.5 .5l2 2 2-2" fill="none" stroke="#555" stroke-width="1"/></svg>
<svg class="a" style="left:1161px;top:109px;" width="16" height="22" viewBox="0 0 16 22"><rect x="4.5" y="1" width="7" height="13" rx="3.5" fill="#78b4e8" stroke="#4a8ac8" stroke-width=".8"/><path d="M1.5 10a6.5 6.5 0 0 0 13 0 M8 16.5V21" fill="none" stroke="#666" stroke-width="1"/></svg>
<div id="t57" class="a t " style="left:1154.5px;top:133.0px;font-size:9.5px;color:#444;font-weight:normal;">Diktovat</div>
<svg class="a" style="left:1167px;top:147px;" width="5" height="4" viewBox="0 0 5 4"><path d="M.5 .5l2 2 2-2" fill="none" stroke="#555" stroke-width="1"/></svg>
<svg class="a" style="left:1200px;top:108px;" width="23" height="21" viewBox="0 0 23 21"><rect x="2" y="5" width="19" height="15" fill="#fff" stroke="#777" stroke-width="1.3"/><path d="M2 9h19 M12 9v11" fill="none" stroke="#777" stroke-width="1.2"/><path d="M7 0L1 8h4l-2 6 7-9H6z" fill="#f5a623"/></svg>
<div id="t58" class="a t " style="left:1199.0px;top:133.0px;font-size:9.5px;color:#444;font-weight:normal;">Návrhy</div>
<div id="t59" class="a t " style="left:1197.0px;top:143.5px;font-size:9.5px;color:#444;font-weight:normal;">designu</div>
<svg class="a" style="left:1294px;top:161px;" width="9" height="5" viewBox="0 0 9 5"><path d="M.5 4.5l4-4 4 4" fill="none" stroke="#555" stroke-width="1"/></svg>
<div class="a" style="left:287px;top:169px;width:1021px;height:1px;background:#d4d3d2;"></div>
<div class="a" style="left:287px;top:170px;width:164px;height:426px;background:#e6e5e8;"></div>
<div class="a" style="left:451px;top:170px;width:857px;height:383px;background:#e8e6e9;"></div>
<div class="a" style="left:287px;top:170px;width:1021px;height:4px;background:linear-gradient(#dcdbdd,#e6e5e8);"></div>
<div class="a" style="left:450px;top:170px;width:1.5px;height:426px;background:#d8d7d9;"></div>
<div class="a" style="left:439.5px;top:172px;width:9px;height:424px;background:#dcdbdd;"></div>
<div class="a" style="left:439.5px;top:172px;width:9px;height:9px;background:#f8f8f8;"></div>
<svg class="a" style="left:441.5px;top:175px;" width="5" height="3" viewBox="0 0 5 3"><path d="M0 3h5L2.5 0z" fill="#555"/></svg>
<div class="a" style="left:439.5px;top:181px;width:9px;height:54px;background:#ffffff;border:1px solid #d0d0d0"></div>
<div class="a" style="left:439.5px;top:586px;width:9px;height:10px;background:#f8f8f8;"></div>
<svg class="a" style="left:441.5px;top:589px;" width="5" height="3" viewBox="0 0 5 3"><path d="M0 0h5L2.5 3z" fill="#555"/></svg>
<div id="t60" class="a t " style="left:294.5px;top:181.0px;font-size:9.5px;color:#c4502c;font-weight:normal;">1</div>
<div id="t61" class="a t " style="left:294.5px;top:260.5px;font-size:9.5px;color:#666;font-weight:normal;">2</div>
<div id="t62" class="a t " style="left:294.5px;top:339.0px;font-size:9.5px;color:#666;font-weight:normal;">3</div>
<div id="t63" class="a t " style="left:294.5px;top:417.0px;font-size:9.5px;color:#666;font-weight:normal;">4</div>
<div id="t64" class="a t " style="left:294.5px;top:495.0px;font-size:9.5px;color:#666;font-weight:normal;">5</div>
<div id="t65" class="a t " style="left:294.5px;top:574.0px;font-size:9.5px;color:#666;font-weight:normal;">6</div>
<div class="a" style="left:309px;top:181px;width:118px;height:68px;background:#fff;border:2px solid #6e1a28;box-shadow:0 0 1.5px 1px rgba(240,170,180,.6)"></div>
<svg class="a" style="left:364px;top:194.5px;" width="7.5" height="7" viewBox="0 0 7.5 7"><path d="M0 0C2.5 .6 5 .6 7.5 0Q7 4 3.75 7Q.5 4 0 0z" fill="#2a70b0"/></svg>
<div class="a" style="left:359px;top:204px;width:15px;height:0.8px;background:#eadada;"></div>
<div class="a" style="left:358px;top:208.3px;width:18px;height:1px;background:#c8c8c8;opacity:.7"></div>
<div class="a" style="left:362px;top:211.3px;width:10px;height:1px;background:#c8c8c8;opacity:.7"></div>
<div id="t66" class="a t " style="left:321.5px;top:217.9px;font-size:5.4px;color:#2462a8;font-weight:bold;-webkit-text-stroke:.15px #2462a8">Changes of the risky behaviors on the Internet</div>
<div id="t67" class="a t " style="left:324.7px;top:222.8px;font-size:5.4px;color:#2462a8;font-weight:bold;-webkit-text-stroke:.15px #2462a8">among students of the Pedagogical Faculty</div>
<div class="a" style="left:321.5px;top:237.3px;width:93px;height:1px;background:repeating-linear-gradient(90deg,#c8c8c8 0 6px,transparent 6px 7.5px);opacity:.8"></div>
<div class="a" style="left:311px;top:262px;width:114px;height:64px;background:#fff;box-shadow:0 0 1px #bbb"></div>
<svg class="a" style="left:316px;top:266px;" width="5" height="4" viewBox="0 0 5 4"><path d="M0 0h5L2.5 4z" fill="#2a74b8"/></svg>
<div class="a" style="left:322px;top:268px;width:12px;height:1px;background:#ddd;"></div>
<div id="t68" class="a t " style="left:320.0px;top:275.3px;font-size:5.6px;color:#2a6db0;font-weight:bold;">Introduction – Palacký University Olomouc</div>
<div class="a" style="left:313px;top:281px;width:58px;height:39px;overflow:hidden;background:linear-gradient(180deg,#9aa8b8 0%,#c8ccd0 35%,#b8b4b0 58%,#6a5a50 78%,#4a4440 100%)"><div class="a bl" style="left:2px;top:4px;width:14px;height:10px;background:#5a88c0;border-radius:50%"></div><div class="a bl" style="left:20px;top:8px;width:8px;height:14px;background:#4a80c8;border-radius:50%"></div><div class="a bl" style="left:36px;top:3px;width:20px;height:22px;background:#d8d8d8;border-radius:50%;opacity:.7"></div><div class="a" style="left:24px;top:2px;width:15px;height:36px;background:#4a2e28;clip-path:polygon(45% 0,55% 0,70% 45%,100% 100%,0 100%,30% 45%);filter:blur(.6px)"></div><div class="a" style="left:11px;top:12px;width:5px;height:22px;background:#c8c0b8;clip-path:polygon(50% 0,100% 30%,100% 100%,0 100%,0 30%);filter:blur(.5px)"></div><div class="a bl" style="left:0;top:26px;width:22px;height:10px;background:#8a5a48;opacity:.8"></div></div>
<div class="a" style="left:371px;top:281px;width:51px;height:39px;overflow:hidden;background:linear-gradient(180deg,#4a80c8 0%,#8ab0d8 18%,#d8d8d8 30%,#d8d4cc 55%,#6a7a50 72%,#787470 78%,#5a5654 100%)"><div class="a" style="left:0;top:0;width:13px;height:30px;background:#e0d8c8;clip-path:polygon(0 0,100% 25%,100% 100%,0 100%);filter:blur(.5px)"></div><div class="a" style="left:40px;top:2px;width:11px;height:30px;background:#d8d4d0;clip-path:polygon(100% 0,0 25%,0 100%,100% 100%);filter:blur(.5px)"></div><div class="a bl" style="left:8px;top:12px;width:10px;height:18px;background:#2a3a28;border-radius:50% 50% 10% 10%;filter:blur(1px)"></div><div class="a bl" style="left:33px;top:12px;width:10px;height:18px;background:#2a3a28;border-radius:50% 50% 10% 10%;filter:blur(1px)"></div><div class="a bl" style="left:17px;top:23px;width:17px;height:5px;background:#6a8a40;filter:blur(.8px)"></div></div>
<div class="a" style="left:316px;top:322px;width:25px;height:0.8px;background:#bbb;"></div>
<div class="a" style="left:311px;top:341px;width:114px;height:64px;background:#fff;box-shadow:0 0 1px #bbb"></div>
<svg class="a" style="left:316px;top:345px;" width="5" height="4" viewBox="0 0 5 4"><path d="M0 0h5L2.5 4z" fill="#2a74b8"/></svg>
<div class="a" style="left:322px;top:347px;width:12px;height:1px;background:#ddd;"></div>
<div id="t69" class="a t " style="left:320.0px;top:352.8px;font-size:5.6px;color:#2a6db0;font-weight:bold;">Introduction – Faculty of Education</div>
<div class="a" style="left:321px;top:360px;width:44.5px;height:40px;overflow:hidden;background:linear-gradient(180deg,#4a5468 0%,#6a7890 12%,#8e9cb8 25%,#9aa8c4 55%,#8a94a8 75%,#7a7c80 90%,#8a8a88 100%)"><div class="a bl" style="left:4px;top:10px;width:30px;height:14px;background:repeating-linear-gradient(90deg,transparent 0 4px,#c8d0e0 4px 6px);opacity:.45;filter:blur(1px)"></div><div class="a bl" style="left:13px;top:24px;width:22px;height:13px;background:repeating-linear-gradient(90deg,#b8b0a0 0 2px,#6a6860 2px 5px);filter:blur(1px)"></div><div class="a" style="left:34px;top:5px;width:4.5px;height:35px;background:#3a3c44;border-radius:40% 40% 0 0;filter:blur(.6px)"></div><div class="a" style="left:33.5px;top:5px;width:5.5px;height:7px;background:#2a2c34;border-radius:50%;filter:blur(.6px)"></div></div>
<div class="a" style="left:367.5px;top:359px;width:44.5px;height:44.5px;overflow:hidden;background:linear-gradient(180deg,#3a2418 0%,#5a3a28 12%,#8a6a50 22%,#a88c70 35%,#9a8068 48%,#201a18 53%,#2a1a18 57%,#c83020 59%,#d83828 68%,#b02818 76%,#3a3038 79%,#2a2630 100%)"><div class="a bl" style="left:0;top:35px;width:44px;height:10px;background:repeating-linear-gradient(90deg,#6a6470 0 2px,#1e1a22 2px 4px,#8a8478 4px 5px,#2a2430 5px 8px);filter:blur(1.1px)"></div></div>
<div class="a" style="left:311px;top:419px;width:114px;height:64px;background:#fff;box-shadow:0 0 1px #bbb"></div>
<svg class="a" style="left:316px;top:423px;" width="5" height="4" viewBox="0 0 5 4"><path d="M0 0h5L2.5 4z" fill="#2a74b8"/></svg>
<div class="a" style="left:322px;top:425px;width:12px;height:1px;background:#ddd;"></div>
<div id="t70" class="a t " style="left:320.0px;top:433.8px;font-size:5.6px;color:#2a6db0;font-weight:bold;">Introduction</div>
<div class="a" style="left:319px;top:441.5px;width:103px;height:1.1px;background:linear-gradient(90deg,#7f8fae 0px 13px, transparent 13px 14.5px,#7f8fae 14.5px 28.5px, transparent 28.5px 30.0px,#7f8fae 30.0px 36.0px, transparent 36.0px 37.5px,#7f8fae 37.5px 43.5px, transparent 43.5px 45.0px,#7f8fae 45.0px 53.0px, transparent 53.0px 54.5px,#7f8fae 54.5px 63.5px, transparent 63.5px 65.0px,#7f8fae 65.0px 77.0px, transparent 77.0px 78.5px,#7f8fae 78.5px 83.5px, transparent 83.5px 85.0px,#7f8fae 85.0px 89.0px, transparent 89.0px 90.5px,#7f8fae 90.5px 103.0px, transparent 103.0px 104.5px);opacity:.45"></div>
<div class="a" style="left:319px;top:445.1px;width:103px;height:1.1px;background:linear-gradient(90deg,#7f8fae 0px 12px, transparent 12px 13.5px,#7f8fae 13.5px 19.5px, transparent 19.5px 21.0px,#7f8fae 21.0px 26.0px, transparent 26.0px 27.5px,#7f8fae 27.5px 38.5px, transparent 38.5px 40.0px,#7f8fae 40.0px 48.0px, transparent 48.0px 49.5px,#7f8fae 49.5px 53.5px, transparent 53.5px 55.0px,#7f8fae 55.0px 59.0px, transparent 59.0px 60.5px,#7f8fae 60.5px 69.5px, transparent 69.5px 71.0px,#7f8fae 71.0px 76.0px, transparent 76.0px 77.5px,#7f8fae 77.5px 88.5px, transparent 88.5px 90.0px,#7f8fae 90.0px 98.0px, transparent 98.0px 99.5px,#7f8fae 99.5px 103.0px, transparent 103.0px 104.5px);opacity:.45"></div>
<div class="a" style="left:319px;top:448.7px;width:103px;height:1.1px;background:linear-gradient(90deg,#7f8fae 0px 10px, transparent 10px 11.5px,#7f8fae 11.5px 22.5px, transparent 22.5px 24.0px,#7f8fae 24.0px 29.0px, transparent 29.0px 30.5px,#7f8fae 30.5px 39.5px, transparent 39.5px 41.0px,#7f8fae 41.0px 55.0px, transparent 55.0px 56.5px,#7f8fae 56.5px 70.5px, transparent 70.5px 72.0px,#7f8fae 72.0px 81.0px, transparent 81.0px 82.5px,#7f8fae 82.5px 89.5px, transparent 89.5px 91.0px,#7f8fae 91.0px 95.0px, transparent 95.0px 96.5px,#7f8fae 96.5px 103.0px, transparent 103.0px 104.5px);opacity:.45"></div>
<div class="a" style="left:319px;top:452.3px;width:103px;height:1.1px;background:linear-gradient(90deg,#7f8fae 0px 8px, transparent 8px 9.5px,#7f8fae 9.5px 14.5px, transparent 14.5px 16.0px,#7f8fae 16.0px 27.0px, transparent 27.0px 28.5px,#7f8fae 28.5px 42.5px, transparent 42.5px 44.0px,#7f8fae 44.0px 54.0px, transparent 54.0px 55.5px,#7f8fae 55.5px 68.5px, transparent 68.5px 70.0px,#7f8fae 70.0px 74.0px, transparent 74.0px 75.5px,#7f8fae 75.5px 79.5px, transparent 79.5px 81.0px,#7f8fae 81.0px 85.0px, transparent 85.0px 86.5px,#7f8fae 86.5px 98.5px, transparent 98.5px 100.0px,#7f8fae 100.0px 103.0px, transparent 103.0px 104.5px);opacity:.45"></div>
<div class="a" style="left:319px;top:455.9px;width:103px;height:1.1px;background:linear-gradient(90deg,#7f8fae 0px 10px, transparent 10px 11.5px,#7f8fae 11.5px 20.5px, transparent 20.5px 22.0px,#7f8fae 22.0px 35.0px, transparent 35.0px 36.5px,#7f8fae 36.5px 47.5px, transparent 47.5px 49.0px,#7f8fae 49.0px 62.0px, transparent 62.0px 63.5px,#7f8fae 63.5px 76.5px, transparent 76.5px 78.0px,#7f8fae 78.0px 86.0px, transparent 86.0px 87.5px,#7f8fae 87.5px 96.5px, transparent 96.5px 98.0px,#7f8fae 98.0px 102.0px, transparent 102.0px 103.5px);opacity:.45"></div>
<div class="a" style="left:319px;top:459.5px;width:103px;height:1.1px;background:linear-gradient(90deg,#7f8fae 0px 7px, transparent 7px 8.5px,#7f8fae 8.5px 19.5px, transparent 19.5px 21.0px,#7f8fae 21.0px 26.0px, transparent 26.0px 27.5px,#7f8fae 27.5px 40.5px, transparent 40.5px 42.0px,#7f8fae 42.0px 49.0px, transparent 49.0px 50.5px,#7f8fae 50.5px 55.5px, transparent 55.5px 57.0px,#7f8fae 57.0px 67.0px, transparent 67.0px 68.5px,#7f8fae 68.5px 73.5px, transparent 73.5px 75.0px,#7f8fae 75.0px 88.0px, transparent 88.0px 89.5px,#7f8fae 89.5px 103.0px, transparent 103.0px 104.5px);opacity:.45"></div>
<div class="a" style="left:319px;top:463.1px;width:103px;height:1.1px;background:linear-gradient(90deg,#7f8fae 0px 13px, transparent 13px 14.5px,#7f8fae 14.5px 25.5px, transparent 25.5px 27.0px,#7f8fae 27.0px 31.0px, transparent 31.0px 32.5px,#7f8fae 32.5px 38.5px, transparent 38.5px 40.0px,#7f8fae 40.0px 46.0px, transparent 46.0px 47.5px,#7f8fae 47.5px 60.5px, transparent 60.5px 62.0px,#7f8fae 62.0px 73.0px, transparent 73.0px 74.5px,#7f8fae 74.5px 85.5px, transparent 85.5px 87.0px,#7f8fae 87.0px 93.0px, transparent 93.0px 94.5px,#7f8fae 94.5px 103.0px, transparent 103.0px 104.5px);opacity:.45"></div>
<div class="a" style="left:319px;top:466.7px;width:103px;height:1.1px;background:linear-gradient(90deg,#7f8fae 0px 4px, transparent 4px 5.5px,#7f8fae 5.5px 14.5px, transparent 14.5px 16.0px,#7f8fae 16.0px 27.0px, transparent 27.0px 28.5px,#7f8fae 28.5px 33.5px, transparent 33.5px 35.0px,#7f8fae 35.0px 47.0px, transparent 47.0px 48.5px,#7f8fae 48.5px 61.5px, transparent 61.5px 63.0px,#7f8fae 63.0px 76.0px, transparent 76.0px 77.5px,#7f8fae 77.5px 90.5px, transparent 90.5px 92.0px,#7f8fae 92.0px 100.0px, transparent 100.0px 101.5px,#7f8fae 101.5px 103.0px, transparent 103.0px 104.5px);opacity:.45"></div>
<div class="a" style="left:319px;top:470.3px;width:103px;height:1.1px;background:linear-gradient(90deg,#7f8fae 0px 4px, transparent 4px 5.5px,#7f8fae 5.5px 9.5px, transparent 9.5px 11.0px,#7f8fae 11.0px 20.0px, transparent 20.0px 21.5px,#7f8fae 21.5px 34.5px, transparent 34.5px 36.0px,#7f8fae 36.0px 43.0px, transparent 43.0px 44.5px,#7f8fae 44.5px 58.5px, transparent 58.5px 60.0px,#7f8fae 60.0px 66.0px, transparent 66.0px 67.5px,#7f8fae 67.5px 78.5px, transparent 78.5px 80.0px,#7f8fae 80.0px 85.0px, transparent 85.0px 86.5px,#7f8fae 86.5px 90.5px, transparent 90.5px 92.0px,#7f8fae 92.0px 98.0px, transparent 98.0px 99.5px,#7f8fae 99.5px 103.0px, transparent 103.0px 104.5px);opacity:.45"></div>
<div class="a" style="left:319px;top:473.9px;width:103px;height:1.1px;background:linear-gradient(90deg,#7f8fae 0px 5px, transparent 5px 6.5px,#7f8fae 6.5px 13.5px, transparent 13.5px 15.0px,#7f8fae 15.0px 21.0px, transparent 21.0px 22.5px,#7f8fae 22.5px 28.5px, transparent 28.5px 30.0px,#7f8fae 30.0px 36.0px, transparent 36.0px 37.5px,#7f8fae 37.5px 49.5px, transparent 49.5px 51.0px,#7f8fae 51.0px 55.0px, transparent 55.0px 56.5px,#7f8fae 56.5px 62.5px, transparent 62.5px 64.0px,#7f8fae 64.0px 68.0px, transparent 68.0px 69.5px,#7f8fae 69.5px 78.5px, transparent 78.5px 80.0px,#7f8fae 80.0px 87.0px, transparent 87.0px 88.5px,#7f8fae 88.5px 96.5px, transparent 96.5px 98.0px,#7f8fae 98.0px 103.0px, transparent 103.0px 104.5px);opacity:.45"></div>
<div class="a" style="left:319px;top:477.5px;width:46px;height:1.1px;background:linear-gradient(90deg,#7f8fae 0px 8px, transparent 8px 9.5px,#7f8fae 9.5px 15.5px, transparent 15.5px 17.0px,#7f8fae 17.0px 30.0px, transparent 30.0px 31.5px,#7f8fae 31.5px 43.5px, transparent 43.5px 45.0px,#7f8fae 45.0px 46.0px, transparent 46.0px 47.5px);opacity:.45"></div>
<div class="a" style="left:311px;top:498px;width:114px;height:64px;background:#fff;box-shadow:0 0 1px #bbb"></div>
<svg class="a" style="left:316px;top:502px;" width="5" height="4" viewBox="0 0 5 4"><path d="M0 0h5L2.5 4z" fill="#2a74b8"/></svg>
<div class="a" style="left:322px;top:504px;width:12px;height:1px;background:#ddd;"></div>
<div id="t71" class="a t " style="left:320.0px;top:512.8px;font-size:5.6px;color:#2a6db0;font-weight:bold;">Introduction</div>
<div class="a" style="left:319px;top:520.5px;width:103px;height:1.1px;background:linear-gradient(90deg,#7f8fae 0px 11px, transparent 11px 12.5px,#7f8fae 12.5px 22.5px, transparent 22.5px 24.0px,#7f8fae 24.0px 37.0px, transparent 37.0px 38.5px,#7f8fae 38.5px 45.5px, transparent 45.5px 47.0px,#7f8fae 47.0px 54.0px, transparent 54.0px 55.5px,#7f8fae 55.5px 64.5px, transparent 64.5px 66.0px,#7f8fae 66.0px 76.0px, transparent 76.0px 77.5px,#7f8fae 77.5px 81.5px, transparent 81.5px 83.0px,#7f8fae 83.0px 96.0px, transparent 96.0px 97.5px,#7f8fae 97.5px 103.0px, transparent 103.0px 104.5px);opacity:.45"></div>
<div class="a" style="left:319px;top:524.1px;width:103px;height:1.1px;background:linear-gradient(90deg,#7f8fae 0px 13px, transparent 13px 14.5px,#7f8fae 14.5px 22.5px, transparent 22.5px 24.0px,#7f8fae 24.0px 38.0px, transparent 38.0px 39.5px,#7f8fae 39.5px 45.5px, transparent 45.5px 47.0px,#7f8fae 47.0px 61.0px, transparent 61.0px 62.5px,#7f8fae 62.5px 75.5px, transparent 75.5px 77.0px,#7f8fae 77.0px 89.0px, transparent 89.0px 90.5px,#7f8fae 90.5px 101.5px, transparent 101.5px 103.0px);opacity:.45"></div>
<div class="a" style="left:319px;top:527.7px;width:103px;height:1.1px;background:linear-gradient(90deg,#7f8fae 0px 11px, transparent 11px 12.5px,#7f8fae 12.5px 23.5px, transparent 23.5px 25.0px,#7f8fae 25.0px 31.0px, transparent 31.0px 32.5px,#7f8fae 32.5px 41.5px, transparent 41.5px 43.0px,#7f8fae 43.0px 55.0px, transparent 55.0px 56.5px,#7f8fae 56.5px 62.5px, transparent 62.5px 64.0px,#7f8fae 64.0px 69.0px, transparent 69.0px 70.5px,#7f8fae 70.5px 78.5px, transparent 78.5px 80.0px,#7f8fae 80.0px 90.0px, transparent 90.0px 91.5px,#7f8fae 91.5px 103.0px, transparent 103.0px 104.5px);opacity:.45"></div>
<div class="a" style="left:319px;top:531.3px;width:103px;height:1.1px;background:linear-gradient(90deg,#7f8fae 0px 12px, transparent 12px 13.5px,#7f8fae 13.5px 25.5px, transparent 25.5px 27.0px,#7f8fae 27.0px 37.0px, transparent 37.0px 38.5px,#7f8fae 38.5px 45.5px, transparent 45.5px 47.0px,#7f8fae 47.0px 54.0px, transparent 54.0px 55.5px,#7f8fae 55.5px 69.5px, transparent 69.5px 71.0px,#7f8fae 71.0px 83.0px, transparent 83.0px 84.5px,#7f8fae 84.5px 92.5px, transparent 92.5px 94.0px,#7f8fae 94.0px 99.0px, transparent 99.0px 100.5px,#7f8fae 100.5px 103.0px, transparent 103.0px 104.5px);opacity:.45"></div>
<div class="a" style="left:319px;top:534.9px;width:103px;height:1.1px;background:linear-gradient(90deg,#7f8fae 0px 7px, transparent 7px 8.5px,#7f8fae 8.5px 20.5px, transparent 20.5px 22.0px,#7f8fae 22.0px 31.0px, transparent 31.0px 32.5px,#7f8fae 32.5px 41.5px, transparent 41.5px 43.0px,#7f8fae 43.0px 55.0px, transparent 55.0px 56.5px,#7f8fae 56.5px 65.5px, transparent 65.5px 67.0px,#7f8fae 67.0px 76.0px, transparent 76.0px 77.5px,#7f8fae 77.5px 87.5px, transparent 87.5px 89.0px,#7f8fae 89.0px 97.0px, transparent 97.0px 98.5px,#7f8fae 98.5px 103.0px, transparent 103.0px 104.5px);opacity:.45"></div>
<div class="a" style="left:319px;top:538.5px;width:103px;height:1.1px;background:linear-gradient(90deg,#7f8fae 0px 10px, transparent 10px 11.5px,#7f8fae 11.5px 16.5px, transparent 16.5px 18.0px,#7f8fae 18.0px 29.0px, transparent 29.0px 30.5px,#7f8fae 30.5px 44.5px, transparent 44.5px 46.0px,#7f8fae 46.0px 56.0px, transparent 56.0px 57.5px,#7f8fae 57.5px 67.5px, transparent 67.5px 69.0px,#7f8fae 69.0px 73.0px, transparent 73.0px 74.5px,#7f8fae 74.5px 79.5px, transparent 79.5px 81.0px,#7f8fae 81.0px 95.0px, transparent 95.0px 96.5px,#7f8fae 96.5px 103.0px, transparent 103.0px 104.5px);opacity:.45"></div>
<div class="a" style="left:319px;top:542.1px;width:103px;height:1.1px;background:linear-gradient(90deg,#7f8fae 0px 5px, transparent 5px 6.5px,#7f8fae 6.5px 18.5px, transparent 18.5px 20.0px,#7f8fae 20.0px 26.0px, transparent 26.0px 27.5px,#7f8fae 27.5px 35.5px, transparent 35.5px 37.0px,#7f8fae 37.0px 41.0px, transparent 41.0px 42.5px,#7f8fae 42.5px 52.5px, transparent 52.5px 54.0px,#7f8fae 54.0px 62.0px, transparent 62.0px 63.5px,#7f8fae 63.5px 76.5px, transparent 76.5px 78.0px,#7f8fae 78.0px 82.0px, transparent 82.0px 83.5px,#7f8fae 83.5px 97.5px, transparent 97.5px 99.0px,#7f8fae 99.0px 103.0px, transparent 103.0px 104.5px);opacity:.45"></div>
<div class="a" style="left:319px;top:545.7px;width:103px;height:1.1px;background:linear-gradient(90deg,#7f8fae 0px 10px, transparent 10px 11.5px,#7f8fae 11.5px 20.5px, transparent 20.5px 22.0px,#7f8fae 22.0px 36.0px, transparent 36.0px 37.5px,#7f8fae 37.5px 49.5px, transparent 49.5px 51.0px,#7f8fae 51.0px 60.0px, transparent 60.0px 61.5px,#7f8fae 61.5px 72.5px, transparent 72.5px 74.0px,#7f8fae 74.0px 82.0px, transparent 82.0px 83.5px,#7f8fae 83.5px 95.5px, transparent 95.5px 97.0px,#7f8fae 97.0px 103.0px, transparent 103.0px 104.5px);opacity:.45"></div>
<div class="a" style="left:319px;top:549.3px;width:103px;height:1.1px;background:linear-gradient(90deg,#7f8fae 0px 8px, transparent 8px 9.5px,#7f8fae 9.5px 20.5px, transparent 20.5px 22.0px,#7f8fae 22.0px 29.0px, transparent 29.0px 30.5px,#7f8fae 30.5px 36.5px, transparent 36.5px 38.0px,#7f8fae 38.0px 50.0px, transparent 50.0px 51.5px,#7f8fae 51.5px 59.5px, transparent 59.5px 61.0px,#7f8fae 61.0px 65.0px, transparent 65.0px 66.5px,#7f8fae 66.5px 75.5px, transparent 75.5px 77.0px,#7f8fae 77.0px 88.0px, transparent 88.0px 89.5px,#7f8fae 89.5px 99.5px, transparent 99.5px 101.0px,#7f8fae 101.0px 103.0px, transparent 103.0px 104.5px);opacity:.45"></div>
<div class="a" style="left:319px;top:552.9px;width:103px;height:1.1px;background:linear-gradient(90deg,#7f8fae 0px 11px, transparent 11px 12.5px,#7f8fae 12.5px 22.5px, transparent 22.5px 24.0px,#7f8fae 24.0px 38.0px, transparent 38.0px 39.5px,#7f8fae 39.5px 43.5px, transparent 43.5px 45.0px,#7f8fae 45.0px 53.0px, transparent 53.0px 54.5px,#7f8fae 54.5px 59.5px, transparent 59.5px 61.0px,#7f8fae 61.0px 74.0px, transparent 74.0px 75.5px,#7f8fae 75.5px 85.5px, transparent 85.5px 87.0px,#7f8fae 87.0px 96.0px, transparent 96.0px 97.5px,#7f8fae 97.5px 103.0px, transparent 103.0px 104.5px);opacity:.45"></div>
<div class="a" style="left:319px;top:556.5px;width:46px;height:1.1px;background:linear-gradient(90deg,#7f8fae 0px 12px, transparent 12px 13.5px,#7f8fae 13.5px 20.5px, transparent 20.5px 22.0px,#7f8fae 22.0px 35.0px, transparent 35.0px 36.5px,#7f8fae 36.5px 46.0px, transparent 46.0px 47.5px);opacity:.45"></div>
<div class="a" style="left:311px;top:576px;width:114px;height:20px;background:#fff;overflow:hidden"><svg class="a" style="left:5px;top:4px" width="5" height="4" viewBox="0 0 5 4"><path d="M0 0h5L2.5 4z" fill="#2a74b8"/></svg><div class="a t" style="left:9px;top:15.5px;font-size:5.6px;font-weight:bold;color:#2a6db0">Introduction</div></div>
<div class="a" style="left:550px;top:178px;width:650px;height:365px;background:#fdfdfe;box-shadow:0 0 1px #ccc"></div>
<svg class="a" style="left:855px;top:245px;" width="39" height="38" viewBox="0 0 39 38"><path d="M0.5 1.2C13 3 26 3 38.5 0.2Q36 22 19 38Q3 22 0.5 1.2z" fill="#1f6fb5"/><g fill="none" stroke="#fff" stroke-width="2"><path d="M10 10v9a8 7.5 0 0 0 16 0v-9"/><path d="M17 5.5v20 M10 6h11a4.5 4.5 0 0 1 0 9h-3.5"/></g></svg>
<div class="a" style="left:844px;top:300.5px;width:61px;height:1.2px;background:#a8a8a8;"></div>
<div id="t72" class="a t " style="left:822.7px;top:318.5px;font-size:13px;color:#6e6e6e;font-weight:normal;-webkit-text-stroke:.3px #6e6e6e">Palacký University</div>
<div id="t73" class="a t " style="left:848.0px;top:332.5px;font-size:13px;color:#6e6e6e;font-weight:normal;-webkit-text-stroke:.3px #6e6e6e">Olomouc</div>
<svg class="a" style="left:940px;top:249px;" width="8" height="12" viewBox="0 0 8 12"><path d="M1 1v9l2.3-2 1.6 3.5 1.4-.7L4.7 7.4H7.5z" fill="#fff" stroke="#333" stroke-width=".8"/></svg>
<div id="t74" class="a t " style="left:612.0px;top:377.7px;font-size:23.2px;color:#175ea6;font-weight:bold;-webkit-text-stroke:.25px #175ea6">Changes of the risky behaviors on the Internet</div>
<div id="t75" class="a t " style="left:627.8px;top:406.4px;font-size:23.2px;color:#175ea6;font-weight:bold;-webkit-text-stroke:.25px #175ea6">among students of the Pedagogical Faculty</div>
<div id="t76" class="a t " style="left:612.6px;top:484.4px;font-size:15.9px;color:#6e6e6e;font-weight:normal;">doc. PhDr. Miroslav CHRÁSKA, Ph.D., Mgr. Jana Miková (student Ph.D.)</div>
<div class="a" style="left:1297.5px;top:172px;width:10px;height:381px;background:#dedcdf;"></div>
<div class="a" style="left:1297.5px;top:172px;width:10px;height:9px;background:#f8f8f8;"></div>
<svg class="a" style="left:1300px;top:175px;" width="5" height="3" viewBox="0 0 5 3"><path d="M0 3h5L2.5 0z" fill="#555"/></svg>
<div class="a" style="left:1297.5px;top:181px;width:10px;height:11px;background:#fff;border:1px solid #d0d0d0"></div>
<div class="a" style="left:1297.5px;top:508px;width:10px;height:9px;background:#f8f8f8;"></div>
<svg class="a" style="left:1300px;top:511px;" width="5" height="3" viewBox="0 0 5 3"><path d="M0 0h5L2.5 3z" fill="#555"/></svg>
<svg class="a" style="left:1300px;top:519px;" width="5" height="8" viewBox="0 0 5 8"><path d="M0 3.5L2.5 1 5 3.5 M0 7L2.5 4.5 5 7" fill="none" stroke="#555" stroke-width="1"/></svg>
<svg class="a" style="left:1300px;top:530px;" width="5" height="8" viewBox="0 0 5 8"><path d="M0 1L2.5 3.5 5 1 M0 4.5L2.5 7 5 4.5" fill="none" stroke="#555" stroke-width="1"/></svg>
<div class="a" style="left:451px;top:553px;width:857px;height:43px;background:#e8e6e9;border-top:1px solid #d6d5d7"></div>
<div id="t77" class="a t " style="left:459.2px;top:560.3px;font-size:10px;color:#555;font-weight:normal;">Kliknutím vložíte poznámky.</div>
<div class="a" style="left:287px;top:596px;width:1021px;height:14px;background:#f3f2f1;border-top:1px solid #e0dfdf"></div>
<div id="t78" class="a t " style="left:291.0px;top:599.7px;font-size:8px;color:#666;font-weight:normal;">Snímek 1 z 40</div>
<svg class="a" style="left:347px;top:598px;" width="11" height="11" viewBox="0 0 11 11"><g fill="none" stroke="#666" stroke-width="1"><rect x="1" y="1" width="7" height="8"/><path d="M5 5l5 5 M4 1v8"/></g></svg>
<div id="t79" class="a t " style="left:369.0px;top:599.7px;font-size:8px;color:#666;font-weight:normal;">Čeština</div>
<svg class="a" style="left:1013px;top:598px;" width="11" height="11" viewBox="0 0 11 11"><g fill="none" stroke="#666" stroke-width="1"><path d="M1 6h9 M1 8.5h9 M1 10.5h9 M3 4l2.5-2.5L8 4"/></g></svg>
<div id="t80" class="a t " style="left:1026.0px;top:599.7px;font-size:8px;color:#666;font-weight:normal;">Poznámky</div>
<div class="a" style="left:1072px;top:597px;width:20px;height:13px;background:#dadada;"></div>
<svg class="a" style="left:1077px;top:598px;" width="11" height="11" viewBox="0 0 11 11"><g fill="none" stroke="#666" stroke-width="1"><rect x="1" y="1" width="9" height="8"/><path d="M3.5 1v8"/></g></svg>
<svg class="a" style="left:1103px;top:598px;" width="11" height="11" viewBox="0 0 11 11"><g fill="none" stroke="#666" stroke-width="1"><rect x="1" y="1" width="3.5" height="3.5"/><rect x="6" y="1" width="3.5" height="3.5"/><rect x="1" y="6" width="3.5" height="3.5"/><rect x="6" y="6" width="3.5" height="3.5"/></g></svg>
<svg class="a" style="left:1130px;top:598px;" width="11" height="11" viewBox="0 0 11 11"><g fill="none" stroke="#666" stroke-width="1"><path d="M1 1h4v8H1z M6 1h4v8H6z"/></g></svg>
<svg class="a" style="left:1156px;top:598px;" width="11" height="11" viewBox="0 0 11 11"><g fill="none" stroke="#666" stroke-width="1"><path d="M1 1h9v6H1z M5.5 7v3 M3.5 10h4"/></g></svg>
<div class="a" style="left:1179px;top:603px;width:6px;height:1px;background:#777;"></div>
<div class="a" style="left:1190px;top:603.5px;width:65px;height:0.8px;background:#c0c0c0;"></div>
<div class="a" style="left:1211.5px;top:598px;width:4px;height:10px;background:#777;"></div>
<svg class="a" style="left:1256px;top:599px;" width="8" height="8" viewBox="0 0 8 8"><path d="M0 4h8M4 0v8" stroke="#777" stroke-width="1"/></svg>
<div id="t81" class="a t " style="left:1271.0px;top:599.7px;font-size:8px;color:#777;font-weight:normal;">77 %</div>
<svg class="a" style="left:1293px;top:597px;" width="13" height="13" viewBox="0 0 13 13"><g fill="none" stroke="#777" stroke-width="1"><rect x="3.5" y="3.5" width="6" height="6"/><path d="M6.5 0v3 M6.5 10v3 M0 6.5h3 M10 6.5h3"/></g></svg>
<div class="a" style="left:177px;top:640.5px;width:52px;height:52px;border-radius:50%;background:#6264a7;"></div>
<div id="t82" class="a t " style="left:188.0px;top:658.3px;font-size:18px;color:#fff;font-weight:bold;">+45</div>
<div class="a" style="left:276.5px;top:641.5px;width:50px;height:50px;border-radius:50%;background:#cfdcec;"></div>
<div id="t83" class="a t " style="left:287.0px;top:658.3px;font-size:18px;color:#1f3d6b;font-weight:normal;-webkit-text-stroke:.4px #1f3d6b">MB</div>
<div class="a" style="left:375.5px;top:641.5px;width:50px;height:50px;border-radius:50%;background:#fde6ce;"></div>
<div id="t84" class="a t " style="left:386.0px;top:658.3px;font-size:18px;color:#8d6b35;font-weight:normal;-webkit-text-stroke:.4px #8d6b35">MB</div>
<div class="a" style="left:450px;top:610px;width:212px;height:110px;background:radial-gradient(circle at 106px 56px,#57557e 0px,#4d4b6c 32px,#433f5c 60px,#3c3a50 95px,#38374a 130px);"></div>
<div class="a" style="left:524.3px;top:634.3px;width:63.4px;height:63.4px;border-radius:50%;background:#9d99ee;box-shadow:0 4px 10px rgba(0,0,0,.3)"></div>
<div class="a" style="left:528px;top:638px;width:56px;height:56px;border-radius:50%;background:#2b2a3a;"></div>
<div class="a" style="left:529.7px;top:639.7px;width:52.6px;height:52.6px;border-radius:50%;background:#ddeff0;"></div>
<div id="t85" class="a t " style="left:540.5px;top:657.2px;font-size:19px;color:#2f6b62;font-weight:normal;-webkit-text-stroke:.4px #2f6b62">CM</div>
<div class="a" style="left:662px;top:610px;width:213px;height:110px;background:#393a46;"></div>
<div class="a" style="left:743px;top:640px;width:52px;height:52px;border-radius:50%;overflow:hidden;background:#efe6d0">
<div class="a" style="left:24px;top:-2px;width:26px;height:12px;background:#5a8a38;filter:blur(2px)"></div>
<div class="a" style="left:-2px;top:25px;width:50px;height:32px;background:#1c1a20;border-radius:50% 55% 0 0;filter:blur(.8px)"></div>
<div class="a" style="left:12px;top:27px;width:9px;height:26px;background:#d8d4d0;filter:blur(.8px)"></div>
<div class="a" style="left:14px;top:29px;width:5px;height:24px;background:#6a6a70;filter:blur(.6px)"></div>
<div class="a" style="left:8px;top:6px;width:17px;height:22px;background:#c49880;border-radius:45%;filter:blur(.8px)"></div>
<div class="a" style="left:7px;top:3px;width:19px;height:8px;background:#2a2420;border-radius:50% 50% 20% 20%;filter:blur(.8px)"></div>
<div class="a" style="left:38px;top:34px;width:12px;height:8px;background:#c49880;border-radius:45%;filter:blur(1px)"></div>
</div>
<div class="a" style="left:875px;top:610px;width:213px;height:110px;background:#2d2d2d;"></div>
<div class="a" style="left:955px;top:640px;width:52px;height:52px;border-radius:50%;background:#f5e6c4;"></div>
<div id="t86" class="a t " style="left:973.0px;top:657.6px;font-size:20px;color:#8a6d2a;font-weight:normal;-webkit-text-stroke:.5px #8a6d2a">C</div>
<div class="a" style="left:1088px;top:610px;width:71px;height:56px;overflow:hidden"><div class="a" style="left:0;top:0;width:71px;height:56px;background:linear-gradient(90deg,#d4cec6 0%,#dcd6ce 50%,#e6e2dc 100%)"></div><div class="a" style="left:12px;top:19px;width:21px;height:33px;background:#2a2420;border-radius:1px;filter:blur(0.8px);"></div><div class="a" style="left:15px;top:22px;width:15px;height:27px;background:#9a9088;border-radius:1px;filter:blur(1px);"></div><div class="a" style="left:26px;top:11px;width:36px;height:46px;background:#cdb98e;border-radius:45% 45% 30% 30%;filter:blur(1.8px);"></div><div class="a" style="left:16px;top:39px;width:50px;height:22px;background:#d49ca6;border-radius:45% 45% 0 0;filter:blur(1.5px);"></div><div class="a" style="left:33px;top:15px;width:20px;height:27px;background:#ead0c0;border-radius:45%;filter:blur(1px);"></div><div class="a" style="left:32px;top:24px;width:21px;height:2.5px;background:#5a4a48;border-radius:2px;filter:blur(0.8px);"></div><div class="a" style="left:38px;top:42px;width:12px;height:16px;background:#1a1418;border-radius:30%;filter:blur(1px);"></div><div class="a" style="left:0px;top:52px;width:71px;height:4px;background:#3a3a3a;border-radius:0;filter:blur(0.5px);opacity:.35"></div></div>
<div class="a" style="left:1159px;top:610px;width:70px;height:56px;overflow:hidden"><div class="a" style="left:0;top:0;width:70px;height:56px;background:linear-gradient(180deg,#8c8c8c 0%,#b4b2ae 30%,#c6c4c0 55%,#bcbab6 100%)"></div><div class="a" style="left:0px;top:9px;width:20px;height:2.5px;background:#f4f4f4;border-radius:2px;filter:blur(0.6px);transform:rotate(8deg)"></div><div class="a" style="left:0px;top:17px;width:15px;height:2.5px;background:#ececec;border-radius:2px;filter:blur(0.6px);transform:rotate(8deg)"></div><div class="a" style="left:54px;top:12px;width:13px;height:40px;background:#f6f6f6;border-radius:2px;filter:blur(1.2px);"></div><div class="a" style="left:44px;top:8px;width:10px;height:44px;background:#d8d8d8;border-radius:2px;filter:blur(1.5px);"></div><div class="a" style="left:0px;top:36px;width:66px;height:26px;background:#84a6ce;border-radius:45% 45% 0 0;filter:blur(1.5px);"></div><div class="a" style="left:27px;top:9px;width:20px;height:28px;background:#5e4234;border-radius:45%;filter:blur(1px);"></div><div class="a" style="left:27px;top:7px;width:20px;height:8px;background:#241c1c;border-radius:50% 50% 20% 20%;filter:blur(0.8px);"></div><div class="a" style="left:28px;top:17px;width:18px;height:2.5px;background:#3a3030;border-radius:2px;filter:blur(0.8px);"></div><div class="a" style="left:0px;top:52px;width:70px;height:4px;background:#3a3a3a;border-radius:0;filter:blur(0.5px);opacity:.35"></div></div>
<div class="a" style="left:1229px;top:610px;width:71px;height:56px;overflow:hidden"><div class="a" style="left:0;top:0;width:71px;height:56px;background:linear-gradient(90deg,#c8c6c4 0%,#e2e2e2 30%,#dedede 100%)"></div><div class="a" style="left:15px;top:0px;width:10px;height:6px;background:#eeeeee;border-radius:0;filter:blur(0.9px);border:1.5px solid #9a90a8"></div><div class="a" style="left:17px;top:8px;width:9px;height:13px;background:#eeeeee;border-radius:0;filter:blur(0.9px);border:1.5px solid #9a8878"></div><div class="a" style="left:29px;top:8px;width:12px;height:9px;background:#eeeeee;border-radius:0;filter:blur(0.9px);border:1.5px solid #6a7098"></div><div class="a" style="left:43px;top:8px;width:12px;height:12px;background:#eeeeee;border-radius:0;filter:blur(0.9px);border:1.5px solid #7a80a8"></div><div class="a" style="left:59px;top:2px;width:11px;height:10px;background:#eeeeee;border-radius:0;filter:blur(0.9px);border:1.5px solid #9898b0"></div><div class="a" style="left:58px;top:14px;width:13px;height:9px;background:#eeeeee;border-radius:0;filter:blur(0.9px);border:1.5px solid #8890b0"></div><div class="a" style="left:14px;top:25px;width:9px;height:12px;background:#eeeeee;border-radius:0;filter:blur(0.9px);border:1.5px solid #9a8878"></div><div class="a" style="left:47px;top:24px;width:11px;height:18px;background:#eeeeee;border-radius:0;filter:blur(0.9px);border:1.5px solid #c8a070"></div><div class="a" style="left:59px;top:25px;width:11px;height:16px;background:#5a8a40;border-radius:1px;filter:blur(0.9px);border:1px solid #2a3050"></div><div class="a" style="left:8px;top:46px;width:60px;height:14px;background:#1c1818;border-radius:45% 45% 0 0;filter:blur(1px);"></div><div class="a" style="left:12px;top:22px;width:23px;height:28px;background:#b48a7a;border-radius:45%;filter:blur(1px);"></div><div class="a" style="left:13px;top:20px;width:21px;height:7px;background:#3a3030;border-radius:50% 50% 20% 20%;filter:blur(0.8px);"></div><div class="a" style="left:0px;top:52px;width:71px;height:4px;background:#3a3a3a;border-radius:0;filter:blur(0.5px);opacity:.35"></div></div>
<div class="a" style="left:1088px;top:666px;width:71px;height:55px;overflow:hidden"><div class="a" style="left:0;top:0;width:71px;height:55px;background:linear-gradient(90deg,#ccd0d8 0%,#d2d6dc 80%,#b4b4b2 84%,#b8b8b6 100%)"></div><div class="a" style="left:9px;top:36px;width:58px;height:24px;background:#e8e6ea;border-radius:45% 45% 0 0;filter:blur(1.5px);"></div><div class="a" style="left:29px;top:8px;width:22px;height:28px;background:#c09484;border-radius:45%;filter:blur(1px);"></div><div class="a" style="left:28px;top:5px;width:23px;height:10px;background:#4a4444;border-radius:50% 50% 20% 20%;filter:blur(0.9px);"></div><div class="a" style="left:33px;top:33px;width:12px;height:8px;background:#b89080;border-radius:30%;filter:blur(1px);"></div></div>
<div class="a" style="left:1159px;top:666px;width:70px;height:55px;overflow:hidden"><div class="a" style="left:0;top:0;width:70px;height:55px;background:linear-gradient(90deg,#bcbcb8 0%,#c4c4c0 60%,#b0b0ac 100%)"></div><div class="a" style="left:29px;top:6px;width:32px;height:38px;background:#c67a48;border-radius:45% 45% 30% 30%;filter:blur(1.6px);"></div><div class="a" style="left:15px;top:38px;width:55px;height:20px;background:#1c2438;border-radius:45% 45% 0 0;filter:blur(1.3px);"></div><div class="a" style="left:35px;top:16px;width:21px;height:27px;background:#e4bca4;border-radius:45%;filter:blur(1px);"></div><div class="a" style="left:0px;top:42px;width:20px;height:13px;background:#8a8482;border-radius:30%;filter:blur(1.5px);"></div></div>
<div class="a" style="left:1229px;top:666px;width:71px;height:55px;overflow:hidden"><div class="a" style="left:0;top:0;width:71px;height:55px;background:linear-gradient(90deg,#c8c4b8 0%,#c6c2b6 60%,#bcb8ac 100%)"></div><div class="a" style="left:20px;top:6px;width:45px;height:52px;background:#a08058;border-radius:45% 45% 30% 30%;filter:blur(2px);"></div><div class="a" style="left:8px;top:46px;width:50px;height:12px;background:#50505c;border-radius:45% 45% 0 0;filter:blur(1.3px);"></div><div class="a" style="left:22px;top:16px;width:21px;height:28px;background:#d4aa98;border-radius:45%;filter:blur(1px);"></div></div>
<div class="a" style="left:1300px;top:610px;width:8px;height:111px;background:#262626;"></div>
<div class="a" style="left:1505px;top:610px;width:8px;height:111px;background:#262626;"></div>
<div class="a" style="left:1308px;top:610px;width:197px;height:111px;overflow:hidden"><div class="a" style="left:0;top:0;width:197px;height:111px;background:linear-gradient(90deg,#e4e6ec 0%,#eceef2 40%,#dcdcdc 60%,#d6d6d4 100%)"></div><div class="a" style="left:95px;top:-5px;width:110px;height:60px;background:#d4d4d2;border-radius:0;filter:blur(4px);"></div><div class="a" style="left:150px;top:20px;width:60px;height:40px;background:#e0e0de;border-radius:0;filter:blur(6px);"></div><div class="a" style="left:108px;top:6px;width:52px;height:3.5px;background:#ffffff;border-radius:2px;filter:blur(0.5px);transform:rotate(-14deg)"></div><div class="a" style="left:125px;top:30px;width:44px;height:3.5px;background:#ffffff;border-radius:2px;filter:blur(0.5px);transform:rotate(-12deg)"></div><div class="a" style="left:136px;top:44px;width:36px;height:3px;background:#ffffff;border-radius:2px;filter:blur(0.5px);transform:rotate(-10deg)"></div><div class="a" style="left:140px;top:52px;width:57px;height:44px;background:#d8d0c4;border-radius:0;filter:blur(1.5px);"></div><div class="a" style="left:160px;top:88px;width:37px;height:8px;background:#5a5a58;border-radius:0;filter:blur(1.5px);"></div><div class="a" style="left:112px;top:30px;width:30px;height:62px;background:#e8e8e6;border-radius:0;filter:blur(2px);"></div><svg class="a" style="left:0;top:0;filter:blur(.7px)" width="197" height="111"><path d="M73 0L139 59" stroke="#b8a070" stroke-width="2.6" opacity=".6"/></svg><div class="a" style="left:0px;top:47px;width:36px;height:40px;background:#c8ae9c;border-radius:0;filter:blur(2px);"></div><div class="a" style="left:30px;top:58px;width:14px;height:32px;background:#d4a488;border-radius:0;filter:blur(1.5px);"></div><div class="a" style="left:58px;top:66px;width:22px;height:14px;background:#d8a890;border-radius:0;filter:blur(1.5px);"></div><div class="a" style="left:40px;top:35px;width:21px;height:67px;background:#fcfcfc;border-radius:0;filter:blur(1px);"></div><div class="a" style="left:42px;top:2px;width:22px;height:32px;background:#d8d8da;border-radius:0;filter:blur(1px);"></div><div class="a" style="left:38px;top:0px;width:28px;height:8px;background:#3a3a3a;border-radius:0;filter:blur(1.5px);"></div><svg class="a" style="left:0;top:0;filter:blur(1.2px)" width="197" height="111"><path d="M43 111C45 95 55 84 78 80L112 78C140 79 175 86 197 92V111z" fill="#7ca2d0"/><path d="M120 80C150 82 180 88 197 93V111H125z" fill="#86acd8"/><path d="M80 72L110 72 106 86 84 86z" fill="#3a3230"/></svg><div class="a" style="left:74px;top:26px;width:40px;height:54px;background:#9a7668;border-radius:48% 48% 42% 42%;filter:blur(1.3px);"></div><div class="a" style="left:76px;top:22px;width:36px;height:13px;background:#3a3432;border-radius:50% 50% 10% 10%;filter:blur(1.3px);"></div><div class="a" style="left:77px;top:46px;width:36px;height:2.5px;background:#3a3434;border-radius:2px;filter:blur(0.8px);"></div><div class="a" style="left:84px;top:34px;width:20px;height:18px;background:#b08c7c;border-radius:45%;filter:blur(3px);"></div></div>
<svg class="a" style="left:20px;top:735px;" width="19" height="19" viewBox="0 0 19 19"><path d="M0 2.5L8 1.3V9H0z M9 1.1L19 0v9H9z M0 10h8v7.7L0 16.5z M9 10h10v9L9 17.9z" fill="#fff"/></svg>
<div class="a" style="left:58px;top:721px;width:405px;height:47px;background:#f0f0f0;"></div>
<svg class="a" style="left:72px;top:734px;" width="20" height="20" viewBox="0 0 20 20"><g fill="none" stroke="#222" stroke-width="1.4"><circle cx="12" cy="8" r="6"/><path d="M7.8 12.2L1.5 18.5"/></g></svg>
<div id="t87" class="a t " style="left:105.5px;top:736.8px;font-size:18px;color:#222;font-weight:normal;">Wpisz tu wyszukiwane słowa</div>
<svg class="a" style="left:483px;top:735px;" width="19" height="19" viewBox="0 0 19 19"><circle cx="9.5" cy="9.5" r="7.8" fill="none" stroke="#fff" stroke-width="2"/></svg>
<svg class="a" style="left:538px;top:734px;" width="22" height="20" viewBox="0 0 22 20"><g fill="none" stroke="#fff" stroke-width="1.4"><rect x="2" y="4.5" width="12" height="11"/><path d="M0 1.5h16 M0 18.5h16 M19 1v3 M19 7v6 M19 16v3"/></g></svg>
<svg class="a" style="left:595px;top:730px;" width="29" height="29" viewBox="0 0 29 29"><defs><linearGradient id="eg" x1="0" y1="1" x2="1" y2="0"><stop offset="0" stop-color="#0b4e9c"/><stop offset=".55" stop-color="#1a8ad8"/><stop offset="1" stop-color="#36c0e8"/></linearGradient><linearGradient id="eg2" x1="0" y1="0" x2="1" y2="1"><stop offset="0" stop-color="#4ad06a"/><stop offset="1" stop-color="#2ab8d8"/></linearGradient></defs><circle cx="14.5" cy="14.5" r="14" fill="url(#eg)"/><path d="M3 9A13 13 0 0 1 28.5 13c.3 4-2.5 6.5-6 6.5-3 0-4.5-1.5-4.5-3.5 0-1 .5-1.5.5-2.5C18.5 10 15 8 11.5 8 7.5 8 4.5 10 3 13z" fill="url(#eg2)"/><path d="M9 16c0-4 3-6 6-6 2.5 0 3.5 1.5 3.5 3 0 .8-.5 1.5-.5 2.5 0 3 3 5 6.5 4.5C22 25 17 28 11 27 6 25 9 20 9 16z" fill="#0d3f86"/></svg>
<svg class="a" style="left:655px;top:733px;" width="28" height="23" viewBox="0 0 28 23"><path d="M1 2h9l3 3h14v17H1z" fill="#f5c04a"/><rect x="1" y="7" width="26" height="15" fill="#ffd666"/><rect x="8" y="13" width="12" height="7" fill="#3a8ee0"/><rect x="10" y="15" width="8" height="3" fill="#ffd666"/></svg>
<svg class="a" style="left:713px;top:729px;" width="28" height="30" viewBox="0 0 28 30"><path d="M9 8V5a5 5 0 0 1 10 0v3" fill="none" stroke="#e8e8e8" stroke-width="2"/><rect x="1" y="8" width="26" height="21" rx="1.5" fill="#f4f4f4"/><rect x="9" y="13" width="4.5" height="4.5" fill="#f25022"/><rect x="14.5" y="13" width="4.5" height="4.5" fill="#7fba00"/><rect x="9" y="18.5" width="4.5" height="4.5" fill="#00a4ef"/><rect x="14.5" y="18.5" width="4.5" height="4.5" fill="#ffb900"/></svg>
<svg class="a" style="left:772px;top:731px;" width="30" height="25" viewBox="0 0 30 25"><path d="M1 9L15 1l14 8v15H1z" fill="#1c6fc4"/><rect x="1" y="9" width="28" height="15" fill="#2ea8f0"/><path d="M1 9l14 9 14-9" fill="#7ad0ff"/></svg>
<div class="a" style="left:818px;top:720px;width:57px;height:48px;background:#3b4658;"></div>
<div class="a" style="left:818px;top:765px;width:57px;height:3px;background:#7ab8f0;"></div>
<div class="a" style="left:881px;top:765px;width:57px;height:3px;background:#7ab8f0;"></div>
<svg class="a" style="left:831px;top:730px;" width="29" height="29" viewBox="0 0 29 29"><circle cx="14.5" cy="14.5" r="14" fill="#db4437"/><path d="M14.5 14.5L2.4 21.5A14 14 0 0 0 20 27.4z" fill="#0f9d58"/><path d="M14.5 14.5L20 27.4A14 14 0 0 0 28.5 14.5z" fill="#ffcd40"/><path d="M14.5 8.5h12.6A14 14 0 0 1 28.5 14.5L20 27.4 14.5 14.5z" fill="#ffcd40"/><path d="M14.5 14.5L2.4 21.5A14 14 0 0 1 2.2 8.5z" fill="#0f9d58"/><circle cx="14.5" cy="14.5" r="6.2" fill="#fff"/><circle cx="14.5" cy="14.5" r="4.8" fill="#4285f4"/></svg>
<svg class="a" style="left:892px;top:731px;" width="26" height="26" viewBox="0 0 26 26"><rect x="9" y="2" width="16" height="22" fill="#fff" stroke="#8aa8d8" stroke-width="1"/><path d="M12 6h10M12 9h10M12 12h10M12 15h10M12 18h10" stroke="#2b579a" stroke-width="1.2"/><rect x="0" y="5" width="14" height="16" fill="#2b579a"/><text x="2.2" y="17.5" font-size="10" font-weight="bold" fill="#fff" font-family="Liberation Sans">W</text></svg>
<svg class="a" style="left:1139px;top:733px;" width="26" height="21" viewBox="0 0 26 21"><circle cx="9" cy="8" r="6" fill="#f5c030"/><path d="M6 20h15a4.5 4.5 0 0 0 0-9 6 6 0 0 0-11.5-1A5 5 0 0 0 6 20z" fill="#cde6f8"/></svg>
<div id="t88" class="a t " style="left:1175.5px;top:738.1px;font-size:17px;color:#fff;font-weight:normal;">19°C</div>
<svg class="a" style="left:1229px;top:740px;" width="17" height="9" viewBox="0 0 17 9"><path d="M1 8l7.5-7L16 8" fill="none" stroke="#fff" stroke-width="1.3"/></svg>
<svg class="a" style="left:1257px;top:734px;" width="14" height="21" viewBox="0 0 14 21"><rect x="3.5" y="0" width="7" height="14" rx="3.5" fill="#fff"/><path d="M1 10a6 6 0 0 0 12 0 M7 16v4 M4 20.5h6" fill="none" stroke="#fff" stroke-width="1.1"/></svg>
<svg class="a" style="left:1283px;top:737px;" width="21" height="14" viewBox="0 0 21 14"><path d="M1 4h3 M1 7h3 M4 2v7 M4 5.5h2" stroke="#fff" stroke-width="1.1" fill="none"/><rect x="6" y="4" width="13.5" height="8" fill="none" stroke="#fff" stroke-width="1.2"/><rect x="7.5" y="5.5" width="10.5" height="5" fill="#fff"/></svg>
<svg class="a" style="left:1314px;top:736px;" width="18" height="17" viewBox="0 0 18 17"><g fill="none" stroke="#fff" stroke-width="1.2"><path d="M1.5 15.5A14 14 0 0 1 15.5 1.5 M5 15.5A10.5 10.5 0 0 1 15.5 5 M8.5 15.5A7 7 0 0 1 15.5 8.5"/></g><circle cx="15.5" cy="15.5" r="1.4" fill="#fff"/></svg>
<svg class="a" style="left:1341px;top:736px;" width="19" height="16" viewBox="0 0 19 16"><path d="M1 5h3.5L9 1v14L4.5 11H1z" fill="none" stroke="#fff" stroke-width="1.2"/><path d="M12 5.5l5 5M17 5.5l-5 5" stroke="#fff" stroke-width="1.1"/></svg>
<div id="t89" class="a t " style="left:1391.5px;top:726.1px;font-size:15.5px;color:#f0f0f0;font-weight:normal;">10:32</div>
<div id="t90" class="a t " style="left:1373.0px;top:747.9px;font-size:15.5px;color:#f0f0f0;font-weight:normal;">21.09.2021</div>
<svg class="a" style="left:1463px;top:735px;" width="24" height="26" viewBox="0 0 24 26"><path d="M1 1h19v14H8l-4 4v-4H1z" fill="#fff"/><path d="M4 5h13M4 8h13M4 11h9" stroke="#1c2a40" stroke-width="1"/></svg>
<div class="a" style="left:1472px;top:742px;width:20px;height:20px;border-radius:50%;background:#2a2a2a;border:1.5px solid #d0d0d0;color:#fff;font-size:13px;line-height:17px;text-align:center;font-weight:bold">2</div>
<div class="a" style="left:1507px;top:722px;width:1px;height:46px;background:#6a7080;"></div>
<div class="a" style="left:0px;top:0px;width:1513px;height:1px;background:#eeeeee;"></div>
<div class="a" style="left:0px;top:1px;width:1513px;height:1px;background:#000;"></div>
<div class="a" style="left:0px;top:0px;width:1px;height:768px;background:#eeeeee;"></div>
<div class="a" style="left:1px;top:1px;width:1px;height:767px;background:#000;"></div>
</body></html>
